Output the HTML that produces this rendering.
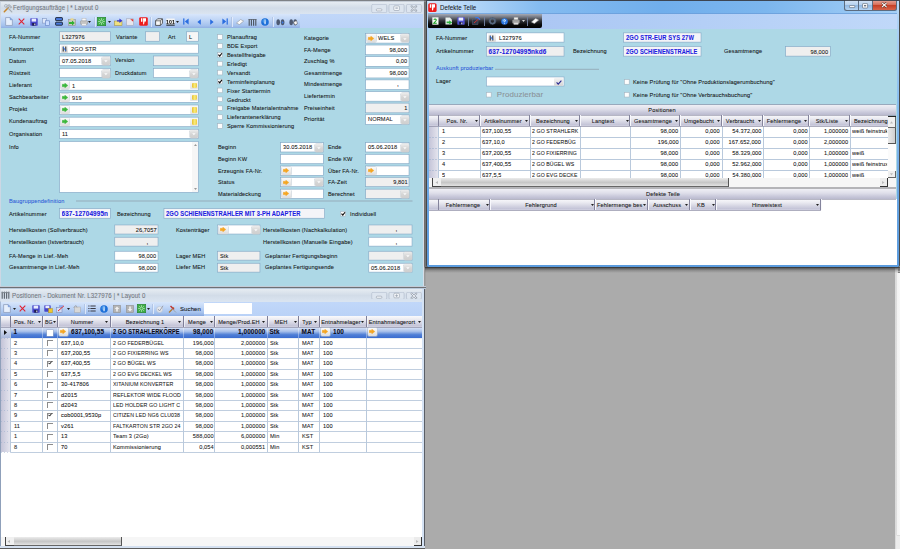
<!DOCTYPE html>
<html lang="de"><head><meta charset="utf-8"><title>Fertigungsauftr&auml;ge</title>
<style>
html,body{margin:0;padding:0;overflow:hidden}
body{width:900px;height:549px;overflow:hidden;position:relative;background:#ababab;
font-family:"Liberation Sans",sans-serif;font-size:5.7px;color:#1c1c1c}
div,svg{position:absolute;box-sizing:content-box}
.t{white-space:nowrap;letter-spacing:0.11px;-webkit-text-stroke:0.07px currentColor}
</style></head><body>

<div style="left:894.8px;top:0px;width:5.2px;height:549px;background:linear-gradient(90deg,#cfcfcf,#ebebeb 1.2px,#ececec);"></div>
<div style="left:896.4px;top:268px;width:4px;height:267px;background:linear-gradient(90deg,#d2d2d2,#f3f3f3 1.4px,#f7f7f7);border-radius:0 0 0 1.5px;box-shadow:0 0.6px 0 0 #cacaca;"></div>
<svg style="left:897px;top:268px" width="3" height="6" viewBox="0 0 3 6"><path d="M0.8 1.2h2.2M0.8 2.8h2.2M0.8 4.4h2.2" stroke="#555" stroke-width="0.8"/></svg>
<div style="left:0px;top:0px;width:426px;height:289px;background:#b9c9db;"></div>
<div style="left:0px;top:0px;width:426px;height:1.2px;background:#7e8186;"></div>
<div style="left:0px;top:1.2px;width:426px;height:1px;background:#c6ced8;"></div>
<div style="left:1px;top:2px;width:423px;height:12px;background:linear-gradient(#e6ecf2 0%,#d2dce8 50%,#dbe5f1 100%);"></div>
<div style="left:1px;top:14px;width:423px;height:15px;background:linear-gradient(#c1d7f9,#bad2f7);"></div>
<div style="left:1px;top:14px;width:299px;height:14.6px;background:linear-gradient(#d8e6fb 0%,#bfd5f6 40%,#a4c1ed 78%,#86a7df 100%);border-radius:0 0 2px 0;"></div>
<div style="left:1px;top:28.4px;width:423px;height:257.6px;background:#add8e6;"></div>
<svg style="left:2.5px;top:3px" width="10" height="10" viewBox="0 0 10 10"><path d="M1.3 8.7L5.2 4.8" stroke="#c8862a" stroke-width="1.5" stroke-linecap="round"/><path d="M4.2 2.2l2.2 -0.6 2.6 2.6 -1 1z" fill="#b8bec6" stroke="#8e959e" stroke-width="0.4"/><path d="M8.8 8.8L3.6 3.6" stroke="#a4abb4" stroke-width="1.2" stroke-linecap="round"/><circle cx="2.9" cy="2.9" r="1.4" fill="none" stroke="#aab1ba" stroke-width="0.9"/></svg>
<div class="t" style="top:3.40px;height:10px;line-height:10px;font-size:6.7px;color:#70757d;left:13px;transform:scaleX(0.897);transform-origin:0 50%;">Fertigungsaufträge | * Layout 0</div>
<svg style="left:370px;top:3.6px" width="54" height="9.0"><rect x="1.70" y="0.3" width="15.00" height="8.40" rx="1.3" fill="#dde5ef" stroke="#b4bfce" stroke-width="0.7"/><rect x="19.00" y="0.3" width="15.10" height="8.40" rx="1.3" fill="#dde5ef" stroke="#b4bfce" stroke-width="0.7"/><rect x="36.50" y="0.3" width="14.90" height="8.40" rx="1.3" fill="#dde5ef" stroke="#b4bfce" stroke-width="0.7"/><rect x="6.300000000000011" y="4.80" width="5.6" height="2.1" rx="0.9" fill="#f4f6f9" stroke="#929caa" stroke-width="0.6"/><rect x="23.80000000000001" y="1.90" width="5.6" height="4.6" rx="1" fill="#f4f6f9" stroke="#929caa" stroke-width="0.6"/><rect x="25.399999999999977" y="3.30" width="2.4" height="1.6" fill="#b4bcc8"/><path d="M41.59999999999998 2.30L46.199999999999974 6.70M46.199999999999974 2.30L41.59999999999998 6.70" stroke="#929caa" stroke-width="2" stroke-linecap="round"/><path d="M41.59999999999998 2.30L46.199999999999974 6.70M46.199999999999974 2.30L41.59999999999998 6.70" stroke="#f6f8fa" stroke-width="0.9" stroke-linecap="round"/></svg>
<svg style="left:5.3px;top:17.0px" width="8" height="9" viewBox="0 0 7 8"><path d="M0.5 0.5h4l2 2v5h-6z" fill="#e6effc" stroke="#8d9ebd" stroke-width="0.7"/><path d="M4.5 0.5v2h2" fill="#7aa0e0" stroke="#6f8fcf" stroke-width="0.4"/></svg>
<svg style="left:17.5px;top:18.0px" width="7" height="7" viewBox="0 0 7 7"><path d="M0.7 0.7L6.3 6.3M6.3 0.7L0.7 6.3" stroke="#e02030" stroke-width="1.05"/></svg>
<svg style="left:30px;top:17.5px" width="8" height="8" viewBox="0 0 8 8"><rect x="0.3" y="0.3" width="7.4" height="7.4" rx="0.6" fill="#4646c8"/><rect x="1.6" y="0.6" width="4.6" height="3" fill="#e8ecff"/><rect x="2.2" y="5" width="3.4" height="2.7" fill="#1c1c50"/><rect x="4.3" y="5.5" width="1" height="1.8" fill="#eee"/></svg>
<svg style="left:42px;top:17.5px" width="8" height="8" viewBox="0 0 8 8"><rect x="0.5" y="0.5" width="4" height="4.6" fill="#dfe8fa" stroke="#7f95c2" stroke-width="0.6"/><rect x="3.4" y="2.8" width="4" height="4.6" fill="#c9dcff" stroke="#5f7fc2" stroke-width="0.6"/></svg>
<svg style="left:55px;top:17.0px" width="8" height="9" viewBox="0 0 8 9"><rect x="0.6" y="0.6" width="6.8" height="3" rx="0.5" fill="#4a7be0" stroke="#1a2030" stroke-width="0.9"/><rect x="0.6" y="5.2" width="6.8" height="3" rx="0.5" fill="#4a7be0" stroke="#1a2030" stroke-width="0.9"/></svg>
<svg style="left:68px;top:17.5px" width="8" height="8" viewBox="0 0 8 8"><rect x="0.5" y="1.5" width="7" height="6" fill="#c9c9c0" stroke="#8a8a80" stroke-width="0.5"/><path d="M1 4h3V2.6L6.8 5 4 7.4V6H1z" fill="#30b030"/><rect x="2.5" y="0.3" width="3" height="2" fill="#e8d890"/></svg>
<svg style="left:79.5px;top:17.5px" width="8" height="8" viewBox="0 0 8 8"><rect x="2" y="0.3" width="4" height="3" fill="#f8f8f8" stroke="#aaa" stroke-width="0.4"/><rect x="0.4" y="2.8" width="7.2" height="3.6" rx="0.8" fill="#c4c4c4" stroke="#909090" stroke-width="0.5"/><rect x="1.8" y="5.4" width="4.4" height="2.2" fill="#eee" stroke="#aaa" stroke-width="0.4"/></svg>
<svg style="left:88.3px;top:20.5px" width="3" height="2" viewBox="0 0 3 2"><path d="M0 0h3L1.5 2z" fill="#222"/></svg>
<div style="left:94px;top:16.5px;width:1px;height:10px;background:#a9bee0;opacity:.7;"></div>
<div style="left:95px;top:16.5px;width:1px;height:10px;background:#e8f0fc;opacity:.8;"></div>
<svg style="left:97.3px;top:17.0px" width="9" height="9" viewBox="0 0 9 9"><rect x="0.3" y="0.3" width="8.4" height="8.4" fill="#3fae48" stroke="#23802c" stroke-width="0.6"/><path d="M4.5 1.2v6.6M1.2 4.5h6.6M2.2 2.2l4.6 4.6M6.8 2.2L2.2 6.8" stroke="#d8f4d8" stroke-width="0.7" opacity=".85"/><circle cx="4.5" cy="4.5" r="1.1" fill="#3fae48"/></svg>
<svg style="left:108.3px;top:20.5px" width="3" height="2" viewBox="0 0 3 2"><path d="M0 0h3L1.5 2z" fill="#222"/></svg>
<svg style="left:114px;top:17.5px" width="9" height="8" viewBox="0 0 9 8"><rect x="0.5" y="3" width="7.5" height="4.5" fill="#efe080" stroke="#9a8a30" stroke-width="0.5"/><path d="M3 2.2h2.4V0.6L8.4 2.8 5.4 5V3.6H3z" fill="#3a3ad0"/></svg>
<svg style="left:126px;top:17.5px" width="8" height="8" viewBox="0 0 8 8"><rect x="0.5" y="0.8" width="7" height="6.4" fill="#e6e6ee" stroke="#a0a0b0" stroke-width="0.5"/><path d="M4.2 1.2h3v2.6z" fill="#e03030"/></svg>
<svg style="left:138.8px;top:17.0px" width="9" height="9" viewBox="0 0 9 9"><rect x="0.2" y="0.2" width="8.6" height="8.6" rx="1.4" fill="#ee1c1c"/><path d="M2 1.2h1.4v3.6H2zM4 1.2h3v3.4H5.6L5 7.4 4.2 7.2z" fill="#fff"/></svg>
<div style="left:150px;top:16.5px;width:1px;height:10px;background:#a9bee0;opacity:.7;"></div>
<div style="left:151px;top:16.5px;width:1px;height:10px;background:#e8f0fc;opacity:.8;"></div>
<svg style="left:154.5px;top:17.5px" width="8" height="8" viewBox="0 0 8 8"><path d="M0.6 2.8L2.6 0.8h4.8v4.4L5.4 7.4H0.6z" fill="#f8f8f8" stroke="#222" stroke-width="0.7"/><path d="M0.6 2.8h4.8v4.6M5.4 2.8l2-2" stroke="#222" stroke-width="0.6" fill="none"/></svg>
<svg style="left:166px;top:17.5px" width="9" height="8" viewBox="0 0 9 8"><rect x="0.3" y="0.5" width="8.4" height="6" fill="#f4f4f4"/><rect x="0.3" y="6.6" width="8.4" height="1" fill="#111"/></svg>
<div class="t" style="top:16.60px;height:10px;line-height:10px;font-size:5.2px;color:#111;font-weight:bold;left:166.4px;will-change:transform;">101</div>
<svg style="left:176.3px;top:20.5px" width="3" height="2" viewBox="0 0 3 2"><path d="M0 0h3L1.5 2z" fill="#222"/></svg>
<svg style="left:182.5px;top:18.0px" width="6" height="7" viewBox="0 0 6 7"><rect x="0.2" y="0.4" width="1.2" height="6.2" fill="#2a6de0"/><path d="M5.6 0.6v5.8L1.8 3.5z" fill="#2a6de0"/></svg>
<svg style="left:197px;top:18.5px" width="4" height="6" viewBox="0 0 4 6"><path d="M3.8 0.3v5.4L0.4 3z" fill="#2a6de0"/></svg>
<svg style="left:209.5px;top:18.5px" width="4" height="6" viewBox="0 0 4 6"><path d="M0.2 0.3v5.4L3.6 3z" fill="#2a6de0"/></svg>
<svg style="left:221.5px;top:18.0px" width="6" height="7" viewBox="0 0 6 7"><rect x="4.6" y="0.4" width="1.2" height="6.2" fill="#2a6de0"/><path d="M0.4 0.6v5.8L4.2 3.5z" fill="#2a6de0"/></svg>
<div style="left:231px;top:16.5px;width:1px;height:10px;background:#a9bee0;opacity:.7;"></div>
<div style="left:232px;top:16.5px;width:1px;height:10px;background:#e8f0fc;opacity:.8;"></div>
<svg style="left:236px;top:18.5px" width="8" height="6" viewBox="0 0 8 6"><path d="M0.5 4L4.6 0.5l3 1.6L3.4 5.6z" fill="#fafafa" stroke="#8a8a8a" stroke-width="0.5"/></svg>
<svg style="left:248px;top:17.5px" width="9" height="8" viewBox="0 0 9 8"><path d="M1.2 1.2v6.6M3.4 1.2v6.6M5.6 1.2v6.6M7.8 1.2v6.6" stroke="#4a525c" stroke-width="1.1"/><path d="M0.5 1.5h8" stroke="#5a626c" stroke-width="0.8"/></svg>
<svg style="left:261px;top:17.5px" width="8" height="8" viewBox="0 0 8 8"><circle cx="4" cy="4" r="3.8" fill="#1c6fd8"/><circle cx="3.4" cy="3" r="2" fill="#5aa6f0" opacity="0.7"/><rect x="3.5" y="3.2" width="1.1" height="3" fill="#fff"/><rect x="3.5" y="1.6" width="1.1" height="1.1" fill="#fff"/></svg>
<div style="left:272px;top:16.5px;width:1px;height:10px;background:#a9bee0;opacity:.7;"></div>
<div style="left:273px;top:16.5px;width:1px;height:10px;background:#e8f0fc;opacity:.8;"></div>
<svg style="left:276px;top:17.5px" width="9" height="8" viewBox="0 0 9 8"><ellipse cx="2.2" cy="4.2" rx="1.8" ry="3" fill="#4e5a72"/><ellipse cx="6.6" cy="4.2" rx="1.8" ry="3" fill="#4e5a72"/><path d="M5.8 3l2 1.4-2 1.6z" fill="#3b7be8"/></svg>
<svg style="left:289px;top:17.5px" width="9" height="8" viewBox="0 0 9 8"><ellipse cx="2.2" cy="4.2" rx="1.8" ry="3" fill="#4e5a72"/><ellipse cx="6.2" cy="4.2" rx="1.8" ry="3" fill="#4e5a72"/><path d="M4.5 4l3-1.4 1 3-2.6 1.6z" fill="#f8f8f8" stroke="#333" stroke-width="0.4"/></svg>
<div class="t" style="top:32.40px;height:10px;line-height:10px;font-size:6.1px;color:#141414;left:8.8px;transform:scaleX(0.926);transform-origin:0 50%;">FA-Nummer</div>
<div class="t" style="top:43.60px;height:10px;line-height:10px;font-size:6.1px;color:#141414;left:8.8px;transform:scaleX(0.926);transform-origin:0 50%;">Kennwort</div>
<div class="t" style="top:55.60px;height:10px;line-height:10px;font-size:6.1px;color:#141414;left:8.8px;transform:scaleX(0.926);transform-origin:0 50%;">Datum</div>
<div class="t" style="top:67.80px;height:10px;line-height:10px;font-size:6.1px;color:#141414;left:8.8px;transform:scaleX(0.926);transform-origin:0 50%;">Rüstzeit</div>
<div class="t" style="top:80.00px;height:10px;line-height:10px;font-size:6.1px;color:#141414;left:8.8px;transform:scaleX(0.926);transform-origin:0 50%;">Lieferant</div>
<div class="t" style="top:92.20px;height:10px;line-height:10px;font-size:6.1px;color:#141414;left:8.8px;transform:scaleX(0.926);transform-origin:0 50%;">Sachbearbeiter</div>
<div class="t" style="top:104.20px;height:10px;line-height:10px;font-size:6.1px;color:#141414;left:8.8px;transform:scaleX(0.926);transform-origin:0 50%;">Projekt</div>
<div class="t" style="top:116.20px;height:10px;line-height:10px;font-size:6.1px;color:#141414;left:8.8px;transform:scaleX(0.926);transform-origin:0 50%;">Kundenauftrag</div>
<div class="t" style="top:128.50px;height:10px;line-height:10px;font-size:6.1px;color:#141414;left:8.8px;transform:scaleX(0.926);transform-origin:0 50%;">Organisation</div>
<div class="t" style="top:141.50px;height:10px;line-height:10px;font-size:6.1px;color:#141414;left:8.8px;transform:scaleX(0.926);transform-origin:0 50%;">Info</div>
<svg style="left:58px;top:30px" width="55" height="14"><rect x="1.65" y="1.75" width="50.70" height="9.50" fill="#efefef" stroke="#86a9c6" stroke-width="0.65"/></svg>
<div class="t" style="top:32.40px;height:10px;line-height:10px;font-size:6.1px;color:#141414;left:61.5px;transform:scaleX(0.926);transform-origin:0 50%;">L327976</div>
<div class="t" style="top:32.30px;height:10px;line-height:10px;font-size:6.1px;color:#141414;left:116px;transform:scaleX(0.926);transform-origin:0 50%;">Variante</div>
<svg style="left:144px;top:30px" width="18" height="14"><rect x="1.65" y="1.75" width="14.00" height="9.50" fill="#efefef" stroke="#86a9c6" stroke-width="0.65"/></svg>
<div class="t" style="top:32.30px;height:10px;line-height:10px;font-size:6.1px;color:#141414;left:168px;transform:scaleX(0.926);transform-origin:0 50%;">Art</div>
<svg style="left:185px;top:30px" width="16" height="14"><rect x="1.65" y="1.75" width="11.70" height="9.50" fill="#f6f6f6" stroke="#86a9c6" stroke-width="0.65"/></svg>
<div class="t" style="top:32.40px;height:10px;line-height:10px;font-size:6.1px;color:#141414;left:188.8px;transform:scaleX(0.926);transform-origin:0 50%;">L</div>
<svg style="left:58px;top:42px" width="143" height="13"><rect x="1.65" y="2.12" width="138.70" height="9.10" fill="#fff" stroke="#86a9c6" stroke-width="0.65"/></svg>
<div style="left:60.5px;top:45px;width:7px;height:8px;background:linear-gradient(#f6f6f6,#d8d8d8);border-radius:1px;"></div>
<svg style="left:61.5px;top:46px" width="5" height="6" viewBox="0 0 5 6"><path d="M1.2 0.5v5M3.8 0.5v5" stroke="#222" stroke-width="1"/><path d="M1.2 1L3.8 5" stroke="#2a6de0" stroke-width="1"/></svg>
<div class="t" style="top:43.87px;height:10px;line-height:10px;font-size:6.1px;color:#141414;left:70.5px;transform:scaleX(0.926);transform-origin:0 50%;">2GO STR</div>
<svg style="left:58px;top:54px" width="55" height="14"><rect x="1.65" y="1.99" width="50.70" height="9.70" fill="#fff" stroke="#86a9c6" stroke-width="0.65"/></svg>
<div class="t" style="top:55.74px;height:10px;line-height:10px;font-size:6.1px;color:#141414;left:61.5px;transform:scaleX(0.926);transform-origin:0 50%;">07.05.2018</div>
<div style="left:101.5px;top:57.2px;width:8.3px;height:8px;background:linear-gradient(#ececec,#d6d6d6 50%,#cfcfcf);border-radius:1.2px;box-shadow:0 0 0 0.5px #c4ccd2;"></div>
<svg style="left:104.1px;top:60.4px" width="4" height="3" viewBox="0 0 4 3"><path d="M0.2 0.2h3.4L1.9 2.3z" fill="#fbfbfb"/></svg>
<div class="t" style="top:55.10px;height:10px;line-height:10px;font-size:6.1px;color:#141414;left:115.3px;transform:scaleX(0.926);transform-origin:0 50%;">Version</div>
<svg style="left:152px;top:54px" width="49" height="14"><rect x="1.35" y="1.99" width="45.00" height="9.70" fill="#efefef" stroke="#86a9c6" stroke-width="0.65"/></svg>
<svg style="left:58px;top:67px" width="55" height="13"><rect x="1.65" y="1.36" width="50.70" height="9.30" fill="#fff" stroke="#86a9c6" stroke-width="0.65"/></svg>
<div style="left:101.5px;top:69.7px;width:8.3px;height:8px;background:linear-gradient(#ececec,#d6d6d6 50%,#cfcfcf);border-radius:1.2px;box-shadow:0 0 0 0.5px #c4ccd2;"></div>
<svg style="left:104.1px;top:72.9px" width="4" height="3" viewBox="0 0 4 3"><path d="M0.2 0.2h3.4L1.9 2.3z" fill="#fbfbfb"/></svg>
<div class="t" style="top:67.80px;height:10px;line-height:10px;font-size:6.1px;color:#141414;left:115.3px;transform:scaleX(0.926);transform-origin:0 50%;">Druckdatum</div>
<svg style="left:152px;top:67px" width="49" height="13"><rect x="1.35" y="1.36" width="45.00" height="9.30" fill="#fff" stroke="#86a9c6" stroke-width="0.65"/></svg>
<div style="left:189.5px;top:69.7px;width:8.3px;height:8px;background:linear-gradient(#ececec,#d6d6d6 50%,#cfcfcf);border-radius:1.2px;box-shadow:0 0 0 0.5px #c4ccd2;"></div>
<svg style="left:192.10000000000002px;top:72.9px" width="4" height="3" viewBox="0 0 4 3"><path d="M0.2 0.2h3.4L1.9 2.3z" fill="#fbfbfb"/></svg>
<svg style="left:58px;top:79px" width="143" height="14"><rect x="1.65" y="1.68" width="138.70" height="9.50" fill="#fff" stroke="#86a9c6" stroke-width="0.65"/></svg>
<div style="left:60.5px;top:81.43px;width:8px;height:8px;background:linear-gradient(#fbfbfb,#dcdcdc);border-radius:1px;box-shadow:0 0 0 0.5px #b9c4cc;"></div>
<svg style="left:61.5px;top:82.93px" width="6" height="5" viewBox="0 0 6 5"><path d="M0.2 1.3h2.6V0.1L5.9 2.5 2.8 4.9V3.7H0.2z" fill="#3cb83c" stroke="#3cb83c" stroke-width="0.3" stroke-linejoin="round"/></svg>
<div class="t" style="top:80.83px;height:10px;line-height:10px;font-size:6.1px;color:#141414;left:72px;transform:scaleX(0.926);transform-origin:0 50%;">1</div>
<div style="left:190.3px;top:81.23px;width:8px;height:8px;background:linear-gradient(#f8f8f8,#e4e4e4);border-radius:1px;"></div>
<div style="left:191.8px;top:82.63px;width:5.4px;height:5.7px;background:linear-gradient(90deg,#e8c030,#f8ec80 55%,#ecc838);border-radius:1px 1px 1.5px 1.5px;"></div>
<svg style="left:58px;top:91px" width="143" height="14"><rect x="1.65" y="1.85" width="138.70" height="9.50" fill="#fff" stroke="#86a9c6" stroke-width="0.65"/></svg>
<div style="left:60.5px;top:93.6px;width:8px;height:8px;background:linear-gradient(#fbfbfb,#dcdcdc);border-radius:1px;box-shadow:0 0 0 0.5px #b9c4cc;"></div>
<svg style="left:61.5px;top:95.1px" width="6" height="5" viewBox="0 0 6 5"><path d="M0.2 1.3h2.6V0.1L5.9 2.5 2.8 4.9V3.7H0.2z" fill="#3cb83c" stroke="#3cb83c" stroke-width="0.3" stroke-linejoin="round"/></svg>
<div class="t" style="top:93.00px;height:10px;line-height:10px;font-size:6.1px;color:#141414;left:72px;transform:scaleX(0.926);transform-origin:0 50%;">919</div>
<div style="left:190.3px;top:93.39999999999999px;width:8px;height:8px;background:linear-gradient(#f8f8f8,#e4e4e4);border-radius:1px;"></div>
<div style="left:191.8px;top:94.79999999999998px;width:5.4px;height:5.7px;background:linear-gradient(90deg,#e8c030,#f8ec80 55%,#ecc838);border-radius:1px 1px 1.5px 1.5px;"></div>
<svg style="left:58px;top:103px" width="143" height="14"><rect x="1.65" y="2.02" width="138.70" height="9.50" fill="#fff" stroke="#86a9c6" stroke-width="0.65"/></svg>
<div style="left:60.5px;top:105.77px;width:8px;height:8px;background:linear-gradient(#fbfbfb,#dcdcdc);border-radius:1px;box-shadow:0 0 0 0.5px #b9c4cc;"></div>
<svg style="left:61.5px;top:107.27px" width="6" height="5" viewBox="0 0 6 5"><path d="M0.2 1.3h2.6V0.1L5.9 2.5 2.8 4.9V3.7H0.2z" fill="#3cb83c" stroke="#3cb83c" stroke-width="0.3" stroke-linejoin="round"/></svg>
<div style="left:190.3px;top:105.57px;width:8px;height:8px;background:linear-gradient(#f8f8f8,#e4e4e4);border-radius:1px;"></div>
<div style="left:191.8px;top:106.96999999999998px;width:5.4px;height:5.7px;background:linear-gradient(90deg,#e8c030,#f8ec80 55%,#ecc838);border-radius:1px 1px 1.5px 1.5px;"></div>
<svg style="left:58px;top:115px" width="143" height="14"><rect x="1.65" y="2.19" width="138.70" height="9.50" fill="#fff" stroke="#86a9c6" stroke-width="0.65"/></svg>
<div style="left:60.5px;top:117.94px;width:8px;height:8px;background:linear-gradient(#fbfbfb,#dcdcdc);border-radius:1px;box-shadow:0 0 0 0.5px #b9c4cc;"></div>
<svg style="left:61.5px;top:119.44px" width="6" height="5" viewBox="0 0 6 5"><path d="M0.2 1.3h2.6V0.1L5.9 2.5 2.8 4.9V3.7H0.2z" fill="#3cb83c" stroke="#3cb83c" stroke-width="0.3" stroke-linejoin="round"/></svg>
<div style="left:190.3px;top:117.74px;width:8px;height:8px;background:linear-gradient(#f8f8f8,#e4e4e4);border-radius:1px;"></div>
<div style="left:191.8px;top:119.13999999999999px;width:5.4px;height:5.7px;background:linear-gradient(90deg,#e8c030,#f8ec80 55%,#ecc838);border-radius:1px 1px 1.5px 1.5px;"></div>
<svg style="left:58px;top:127px" width="143" height="13"><rect x="1.65" y="2.31" width="138.70" height="9.10" fill="#fff" stroke="#86a9c6" stroke-width="0.65"/></svg>
<div class="t" style="top:129.16px;height:10px;line-height:10px;font-size:6.1px;color:#141414;left:61.5px;transform:scaleX(0.926);transform-origin:0 50%;">11</div>
<div style="left:189.5px;top:130.06px;width:8.3px;height:8px;background:linear-gradient(#ececec,#d6d6d6 50%,#cfcfcf);border-radius:1.2px;box-shadow:0 0 0 0.5px #c4ccd2;"></div>
<svg style="left:192.10000000000002px;top:133.26000000000002px" width="4" height="3" viewBox="0 0 4 3"><path d="M0.2 0.2h3.4L1.9 2.3z" fill="#fbfbfb"/></svg>
<svg style="left:58px;top:140px" width="143" height="55"><rect x="1.65" y="1.45" width="138.70" height="50.90" fill="#fff" stroke="#86a9c6" stroke-width="0.65"/></svg>
<div style="left:192.3px;top:142px;width:5.6px;height:50px;background:#f6f6f6;"></div>
<svg style="left:193.5px;top:144px" width="3" height="2" viewBox="0 0 3 2"><path d="M0 2h3L1.5 0z" fill="#999"/></svg>
<svg style="left:193.5px;top:188px" width="3" height="2" viewBox="0 0 3 2"><path d="M0 0h3L1.5 2z" fill="#999"/></svg>
<svg style="left:216px;top:33px" width="9" height="9"><rect x="1.60" y="1.65" width="4.90" height="4.70" fill="#fdfdfd" stroke="#a4b4c0" stroke-width="0.6"/></svg>
<div class="t" style="top:32.20px;height:10px;line-height:10px;font-size:6.1px;color:#141414;left:226.7px;transform:scaleX(0.926);transform-origin:0 50%;">Planauftrag</div>
<svg style="left:216px;top:42px" width="9" height="9"><rect x="1.60" y="1.55" width="4.90" height="4.70" fill="#fdfdfd" stroke="#a4b4c0" stroke-width="0.6"/></svg>
<div class="t" style="top:41.10px;height:10px;line-height:10px;font-size:6.1px;color:#141414;left:226.7px;transform:scaleX(0.926);transform-origin:0 50%;">BDE Export</div>
<svg style="left:216px;top:51px" width="9" height="9"><rect x="1.60" y="1.45" width="4.90" height="4.70" fill="#fdfdfd" stroke="#a4b4c0" stroke-width="0.6"/><path d="M2.40 3.65l1.3 1.4 2.2-2.8" stroke="#0c0c0c" stroke-width="1.15" fill="none"/></svg>
<div class="t" style="top:50.00px;height:10px;line-height:10px;font-size:6.1px;color:#141414;left:226.7px;transform:scaleX(0.926);transform-origin:0 50%;">Bestellfreigabe</div>
<svg style="left:216px;top:60px" width="9" height="9"><rect x="1.60" y="1.35" width="4.90" height="4.70" fill="#fdfdfd" stroke="#a4b4c0" stroke-width="0.6"/></svg>
<div class="t" style="top:58.90px;height:10px;line-height:10px;font-size:6.1px;color:#141414;left:226.7px;transform:scaleX(0.926);transform-origin:0 50%;">Erledigt</div>
<svg style="left:216px;top:68px" width="9" height="9"><rect x="1.60" y="2.25" width="4.90" height="4.70" fill="#fdfdfd" stroke="#a4b4c0" stroke-width="0.6"/></svg>
<div class="t" style="top:67.80px;height:10px;line-height:10px;font-size:6.1px;color:#141414;left:226.7px;transform:scaleX(0.926);transform-origin:0 50%;">Versandt</div>
<svg style="left:216px;top:77px" width="9" height="9"><rect x="1.60" y="2.15" width="4.90" height="4.70" fill="#fdfdfd" stroke="#a4b4c0" stroke-width="0.6"/><path d="M2.40 4.35l1.3 1.4 2.2-2.8" stroke="#0c0c0c" stroke-width="1.15" fill="none"/></svg>
<div class="t" style="top:76.70px;height:10px;line-height:10px;font-size:6.1px;color:#141414;left:226.7px;transform:scaleX(0.926);transform-origin:0 50%;">Terminfeinplanung</div>
<svg style="left:216px;top:86px" width="9" height="9"><rect x="1.60" y="2.05" width="4.90" height="4.70" fill="#fdfdfd" stroke="#a4b4c0" stroke-width="0.6"/></svg>
<div class="t" style="top:85.60px;height:10px;line-height:10px;font-size:6.1px;color:#141414;left:226.7px;transform:scaleX(0.926);transform-origin:0 50%;">Fixer Starttermin</div>
<svg style="left:216px;top:95px" width="9" height="9"><rect x="1.60" y="1.95" width="4.90" height="4.70" fill="#fdfdfd" stroke="#a4b4c0" stroke-width="0.6"/></svg>
<div class="t" style="top:94.50px;height:10px;line-height:10px;font-size:6.1px;color:#141414;left:226.7px;transform:scaleX(0.926);transform-origin:0 50%;">Gedruckt</div>
<svg style="left:216px;top:104px" width="9" height="9"><rect x="1.60" y="1.85" width="4.90" height="4.70" fill="#fdfdfd" stroke="#a4b4c0" stroke-width="0.6"/></svg>
<div class="t" style="top:103.40px;height:10px;line-height:10px;font-size:6.1px;color:#141414;left:226.7px;transform:scaleX(0.926);transform-origin:0 50%;">Freigabe Materialentnahme</div>
<svg style="left:216px;top:113px" width="9" height="9"><rect x="1.60" y="1.75" width="4.90" height="4.70" fill="#fdfdfd" stroke="#a4b4c0" stroke-width="0.6"/></svg>
<div class="t" style="top:112.30px;height:10px;line-height:10px;font-size:6.1px;color:#141414;left:226.7px;transform:scaleX(0.926);transform-origin:0 50%;">Lieferantenerklärung</div>
<svg style="left:216px;top:122px" width="9" height="9"><rect x="1.60" y="1.65" width="4.90" height="4.70" fill="#fdfdfd" stroke="#a4b4c0" stroke-width="0.6"/></svg>
<div class="t" style="top:121.20px;height:10px;line-height:10px;font-size:6.1px;color:#141414;left:226.7px;transform:scaleX(0.926);transform-origin:0 50%;">Sperre Kommissionierung</div>
<div class="t" style="top:33.10px;height:10px;line-height:10px;font-size:6.1px;color:#141414;left:303.6px;transform:scaleX(0.926);transform-origin:0 50%;">Kategorie</div>
<svg style="left:364px;top:32px" width="48" height="14"><rect x="1.65" y="1.40" width="43.40" height="9.70" fill="#fff" stroke="#86a9c6" stroke-width="0.65"/></svg>
<div class="t" style="top:44.50px;height:10px;line-height:10px;font-size:6.1px;color:#141414;left:303.6px;transform:scaleX(0.926);transform-origin:0 50%;">FA-Menge</div>
<svg style="left:364px;top:43px" width="48" height="14"><rect x="1.65" y="2.02" width="43.40" height="9.70" fill="#fff" stroke="#86a9c6" stroke-width="0.65"/></svg>
<div class="t" style="top:56.20px;height:10px;line-height:10px;font-size:6.1px;color:#141414;left:303.6px;transform:scaleX(0.926);transform-origin:0 50%;">Zuschlag %</div>
<svg style="left:364px;top:55px" width="48" height="14"><rect x="1.65" y="1.64" width="43.40" height="9.70" fill="#fff" stroke="#86a9c6" stroke-width="0.65"/></svg>
<div class="t" style="top:67.50px;height:10px;line-height:10px;font-size:6.1px;color:#141414;left:303.6px;transform:scaleX(0.926);transform-origin:0 50%;">Gesamtmenge</div>
<svg style="left:364px;top:66px" width="48" height="14"><rect x="1.65" y="2.26" width="43.40" height="9.70" fill="#fff" stroke="#86a9c6" stroke-width="0.65"/></svg>
<div class="t" style="top:79.20px;height:10px;line-height:10px;font-size:6.1px;color:#141414;left:303.6px;transform:scaleX(0.926);transform-origin:0 50%;">Mindestmenge</div>
<svg style="left:364px;top:78px" width="48" height="14"><rect x="1.65" y="1.88" width="43.40" height="9.70" fill="#fff" stroke="#86a9c6" stroke-width="0.65"/></svg>
<div class="t" style="top:90.80px;height:10px;line-height:10px;font-size:6.1px;color:#141414;left:303.6px;transform:scaleX(0.926);transform-origin:0 50%;">Liefertermin</div>
<svg style="left:364px;top:90px" width="48" height="14"><rect x="1.65" y="1.50" width="43.40" height="9.70" fill="#fff" stroke="#86a9c6" stroke-width="0.65"/></svg>
<div class="t" style="top:102.80px;height:10px;line-height:10px;font-size:6.1px;color:#141414;left:303.6px;transform:scaleX(0.926);transform-origin:0 50%;">Preiseinheit</div>
<svg style="left:364px;top:101px" width="48" height="14"><rect x="1.65" y="2.12" width="43.40" height="9.70" fill="#efefef" stroke="#86a9c6" stroke-width="0.65"/></svg>
<div class="t" style="top:114.30px;height:10px;line-height:10px;font-size:6.1px;color:#141414;left:303.6px;transform:scaleX(0.926);transform-origin:0 50%;">Priorität</div>
<svg style="left:364px;top:113px" width="48" height="14"><rect x="1.65" y="1.74" width="43.40" height="9.70" fill="#fff" stroke="#86a9c6" stroke-width="0.65"/></svg>
<div style="left:366.7px;top:34.25px;width:9px;height:8px;background:linear-gradient(#fbfbfb,#dcdcdc);border-radius:1px;box-shadow:0 0 0 0.5px #b9c4cc;"></div>
<svg style="left:367.7px;top:35.75px" width="6" height="5" viewBox="0 0 6 5"><path d="M0.2 1.3h2.6V0.1L5.9 2.5 2.8 4.9V3.7H0.2z" fill="#f5a623" stroke="#f5a623" stroke-width="0.3" stroke-linejoin="round"/></svg>
<div class="t" style="top:33.20px;height:10px;line-height:10px;font-size:6.1px;color:#141414;left:378px;transform:scaleX(0.926);transform-origin:0 50%;">WELS</div>
<div style="left:400.5px;top:34.45px;width:8.3px;height:8px;background:linear-gradient(#ececec,#d6d6d6 50%,#cfcfcf);border-radius:1.2px;box-shadow:0 0 0 0.5px #c4ccd2;"></div>
<svg style="left:403.1px;top:37.65px" width="4" height="3" viewBox="0 0 4 3"><path d="M0.2 0.2h3.4L1.9 2.3z" fill="#fbfbfb"/></svg>
<div class="t" style="top:44.60px;height:10px;line-height:10px;font-size:6.1px;color:#141414;right:492.5px;text-align:right;transform:scaleX(0.926);transform-origin:100% 50%;">98,000</div>
<div class="t" style="top:56.30px;height:10px;line-height:10px;font-size:6.1px;color:#141414;right:492.5px;text-align:right;transform:scaleX(0.926);transform-origin:100% 50%;">0,00</div>
<div class="t" style="top:67.60px;height:10px;line-height:10px;font-size:6.1px;color:#141414;right:492.5px;text-align:right;transform:scaleX(0.926);transform-origin:100% 50%;">98,000</div>
<div class="t" style="top:79.20px;height:10px;line-height:10px;font-size:6.6px;color:#141414;right:501px;text-align:right;">,</div>
<div style="left:400.5px;top:92.55px;width:8.3px;height:8px;background:linear-gradient(#ececec,#d6d6d6 50%,#cfcfcf);border-radius:1.2px;box-shadow:0 0 0 0.5px #c4ccd2;"></div>
<svg style="left:403.1px;top:95.75px" width="4" height="3" viewBox="0 0 4 3"><path d="M0.2 0.2h3.4L1.9 2.3z" fill="#fbfbfb"/></svg>
<div class="t" style="top:102.90px;height:10px;line-height:10px;font-size:6.1px;color:#141414;right:492.5px;text-align:right;transform:scaleX(0.926);transform-origin:100% 50%;">1</div>
<div class="t" style="top:114.40px;height:10px;line-height:10px;font-size:6.1px;color:#141414;left:367.5px;transform:scaleX(0.926);transform-origin:0 50%;">NORMAL</div>
<div style="left:400.5px;top:115.78999999999999px;width:8.3px;height:8px;background:linear-gradient(#ececec,#d6d6d6 50%,#cfcfcf);border-radius:1.2px;box-shadow:0 0 0 0.5px #c4ccd2;"></div>
<svg style="left:403.1px;top:118.99px" width="4" height="3" viewBox="0 0 4 3"><path d="M0.2 0.2h3.4L1.9 2.3z" fill="#fbfbfb"/></svg>
<div class="t" style="top:142.30px;height:10px;line-height:10px;font-size:6.1px;color:#141414;left:217.7px;transform:scaleX(0.926);transform-origin:0 50%;">Beginn</div>
<div class="t" style="top:142.30px;height:10px;line-height:10px;font-size:6.1px;color:#141414;left:328.3px;transform:scaleX(0.926);transform-origin:0 50%;">Ende</div>
<svg style="left:279px;top:141px" width="47" height="14"><rect x="1.65" y="1.60" width="42.70" height="9.40" fill="#fff" stroke="#86a9c6" stroke-width="0.65"/></svg>
<svg style="left:364px;top:141px" width="48" height="14"><rect x="1.65" y="1.60" width="43.40" height="9.40" fill="#fff" stroke="#86a9c6" stroke-width="0.65"/></svg>
<div class="t" style="top:154.30px;height:10px;line-height:10px;font-size:6.1px;color:#141414;left:217.7px;transform:scaleX(0.926);transform-origin:0 50%;">Beginn KW</div>
<div class="t" style="top:154.30px;height:10px;line-height:10px;font-size:6.1px;color:#141414;left:328.3px;transform:scaleX(0.926);transform-origin:0 50%;">Ende KW</div>
<svg style="left:279px;top:152px" width="47" height="14"><rect x="1.65" y="2.30" width="42.70" height="9.40" fill="#fff" stroke="#86a9c6" stroke-width="0.65"/></svg>
<svg style="left:364px;top:152px" width="48" height="14"><rect x="1.65" y="2.30" width="43.40" height="9.40" fill="#fff" stroke="#86a9c6" stroke-width="0.65"/></svg>
<div class="t" style="top:165.80px;height:10px;line-height:10px;font-size:6.1px;color:#141414;left:217.7px;transform:scaleX(0.926);transform-origin:0 50%;">Erzeugnis FA-Nr.</div>
<div class="t" style="top:165.80px;height:10px;line-height:10px;font-size:6.1px;color:#141414;left:328.3px;transform:scaleX(0.926);transform-origin:0 50%;">Über FA-Nr.</div>
<svg style="left:279px;top:164px" width="47" height="14"><rect x="1.65" y="1.95" width="42.70" height="9.40" fill="#fff" stroke="#86a9c6" stroke-width="0.65"/></svg>
<svg style="left:364px;top:164px" width="48" height="14"><rect x="1.65" y="1.95" width="43.40" height="9.40" fill="#fff" stroke="#86a9c6" stroke-width="0.65"/></svg>
<div class="t" style="top:177.30px;height:10px;line-height:10px;font-size:6.1px;color:#141414;left:217.7px;transform:scaleX(0.926);transform-origin:0 50%;">Status</div>
<div class="t" style="top:177.30px;height:10px;line-height:10px;font-size:6.1px;color:#141414;left:328.3px;transform:scaleX(0.926);transform-origin:0 50%;">FA-Zeit</div>
<svg style="left:279px;top:175px" width="47" height="14"><rect x="1.65" y="2.30" width="42.70" height="9.40" fill="#fff" stroke="#86a9c6" stroke-width="0.65"/></svg>
<svg style="left:364px;top:175px" width="48" height="14"><rect x="1.65" y="2.30" width="43.40" height="9.40" fill="#efefef" stroke="#86a9c6" stroke-width="0.65"/></svg>
<div class="t" style="top:188.80px;height:10px;line-height:10px;font-size:6.1px;color:#141414;left:217.7px;transform:scaleX(0.926);transform-origin:0 50%;">Materialdeckung</div>
<div class="t" style="top:188.80px;height:10px;line-height:10px;font-size:6.1px;color:#141414;left:328.3px;transform:scaleX(0.926);transform-origin:0 50%;">Berechnet</div>
<svg style="left:279px;top:187px" width="47" height="14"><rect x="1.65" y="2.15" width="42.70" height="9.40" fill="#fff" stroke="#86a9c6" stroke-width="0.65"/></svg>
<svg style="left:364px;top:187px" width="48" height="14"><rect x="1.65" y="2.15" width="43.40" height="9.40" fill="#efefef" stroke="#86a9c6" stroke-width="0.65"/></svg>
<div class="t" style="top:142.40px;height:10px;line-height:10px;font-size:6.1px;color:#141414;left:282.5px;transform:scaleX(0.926);transform-origin:0 50%;">30.05.2018</div>
<div style="left:315.3px;top:143.5px;width:7.3px;height:8px;background:linear-gradient(#ececec,#d6d6d6 50%,#cfcfcf);border-radius:1.2px;box-shadow:0 0 0 0.5px #c4ccd2;"></div>
<svg style="left:317.40000000000003px;top:146.70000000000002px" width="4" height="3" viewBox="0 0 4 3"><path d="M0.2 0.2h3.4L1.9 2.3z" fill="#fbfbfb"/></svg>
<div class="t" style="top:142.40px;height:10px;line-height:10px;font-size:6.1px;color:#141414;left:367.5px;transform:scaleX(0.926);transform-origin:0 50%;">05.06.2018</div>
<div style="left:400.5px;top:143.5px;width:8.3px;height:8px;background:linear-gradient(#ececec,#d6d6d6 50%,#cfcfcf);border-radius:1.2px;box-shadow:0 0 0 0.5px #c4ccd2;"></div>
<svg style="left:403.1px;top:146.70000000000002px" width="4" height="3" viewBox="0 0 4 3"><path d="M0.2 0.2h3.4L1.9 2.3z" fill="#fbfbfb"/></svg>
<div style="left:281.7px;top:166.65px;width:9px;height:8px;background:linear-gradient(#fbfbfb,#dcdcdc);border-radius:1px;box-shadow:0 0 0 0.5px #b9c4cc;"></div>
<svg style="left:282.7px;top:168.15px" width="6" height="5" viewBox="0 0 6 5"><path d="M0.2 1.3h2.6V0.1L5.9 2.5 2.8 4.9V3.7H0.2z" fill="#f5a623" stroke="#f5a623" stroke-width="0.3" stroke-linejoin="round"/></svg>
<div style="left:366.7px;top:166.65px;width:9px;height:8px;background:linear-gradient(#fbfbfb,#dcdcdc);border-radius:1px;box-shadow:0 0 0 0.5px #b9c4cc;"></div>
<svg style="left:367.7px;top:168.15px" width="6" height="5" viewBox="0 0 6 5"><path d="M0.2 1.3h2.6V0.1L5.9 2.5 2.8 4.9V3.7H0.2z" fill="#f5a623" stroke="#f5a623" stroke-width="0.3" stroke-linejoin="round"/></svg>
<div style="left:281.7px;top:178.0px;width:9px;height:8px;background:linear-gradient(#fbfbfb,#dcdcdc);border-radius:1px;box-shadow:0 0 0 0.5px #b9c4cc;"></div>
<svg style="left:282.7px;top:179.5px" width="6" height="5" viewBox="0 0 6 5"><path d="M0.2 1.3h2.6V0.1L5.9 2.5 2.8 4.9V3.7H0.2z" fill="#f5a623" stroke="#f5a623" stroke-width="0.3" stroke-linejoin="round"/></svg>
<div style="left:315.3px;top:178.2px;width:7.3px;height:8px;background:linear-gradient(#ececec,#d6d6d6 50%,#cfcfcf);border-radius:1.2px;box-shadow:0 0 0 0.5px #c4ccd2;"></div>
<svg style="left:317.40000000000003px;top:181.4px" width="4" height="3" viewBox="0 0 4 3"><path d="M0.2 0.2h3.4L1.9 2.3z" fill="#fbfbfb"/></svg>
<div class="t" style="top:177.30px;height:10px;line-height:10px;font-size:6.1px;color:#141414;right:492.5px;text-align:right;transform:scaleX(0.926);transform-origin:100% 50%;">9,801</div>
<div style="left:281.7px;top:189.85px;width:9px;height:8px;background:linear-gradient(#fbfbfb,#dcdcdc);border-radius:1px;box-shadow:0 0 0 0.5px #b9c4cc;"></div>
<svg style="left:282.7px;top:191.35px" width="6" height="5" viewBox="0 0 6 5"><path d="M0.2 1.3h2.6V0.1L5.9 2.5 2.8 4.9V3.7H0.2z" fill="#f5a623" stroke="#f5a623" stroke-width="0.3" stroke-linejoin="round"/></svg>
<div style="left:400.5px;top:190.04999999999998px;width:8.3px;height:8px;background:linear-gradient(#ececec,#d6d6d6 50%,#cfcfcf);border-radius:1.2px;box-shadow:0 0 0 0.5px #c4ccd2;"></div>
<svg style="left:403.1px;top:193.25px" width="4" height="3" viewBox="0 0 4 3"><path d="M0.2 0.2h3.4L1.9 2.3z" fill="#fbfbfb"/></svg>
<div class="t" style="top:196.00px;height:10px;line-height:10px;font-size:6.1px;color:#2d5bd8;left:8.8px;transform:scaleX(0.926);transform-origin:0 50%;">Baugruppendefinition</div>
<svg style="left:75px;top:199px" width="340" height="4" viewBox="0 0 340 4"><path d="M1 2h336.5" stroke="#8fa2ae" stroke-width="0.8"/></svg>
<div class="t" style="top:209.20px;height:10px;line-height:10px;font-size:6.1px;color:#141414;left:8.8px;transform:scaleX(0.926);transform-origin:0 50%;">Artikelnummer</div>
<svg style="left:58px;top:207px" width="55" height="14"><rect x="1.65" y="1.65" width="50.70" height="9.60" fill="#f4f4f8" stroke="#86a9c6" stroke-width="0.65"/></svg>
<div class="t" style="top:208.70px;height:10px;line-height:10px;font-size:6.4px;color:#1a1ae0;font-weight:bold;left:61.5px;width:48.0px;overflow:hidden;">637-12704995n</div>
<div class="t" style="top:209.20px;height:10px;line-height:10px;font-size:6.1px;color:#141414;left:117.3px;transform:scaleX(0.926);transform-origin:0 50%;">Bezeichnung</div>
<svg style="left:162px;top:207px" width="165" height="14"><rect x="1.95" y="1.65" width="160.70" height="9.60" fill="#f4f4f8" stroke="#86a9c6" stroke-width="0.65"/></svg>
<div class="t" style="top:208.70px;height:10px;line-height:10px;font-size:6.4px;color:#1a1ae0;font-weight:bold;left:166px;transform:scaleX(0.904);transform-origin:0 50%;">2GO SCHIENENSTRAHLER MIT 3-PH ADAPTER</div>
<svg style="left:339px;top:210px" width="9" height="9"><rect x="1.70" y="1.45" width="4.90" height="4.70" fill="#fdfdfd" stroke="#a4b4c0" stroke-width="0.6"/><path d="M2.50 3.65l1.3 1.4 2.2-2.8" stroke="#0c0c0c" stroke-width="1.15" fill="none"/></svg>
<div class="t" style="top:209.00px;height:10px;line-height:10px;font-size:6.1px;color:#141414;left:350px;transform:scaleX(0.926);transform-origin:0 50%;">Individuell</div>
<div class="t" style="top:224.90px;height:10px;line-height:10px;font-size:6.1px;color:#141414;left:8.8px;transform:scaleX(0.926);transform-origin:0 50%;">Herstellkosten (Sollverbrauch)</div>
<div class="t" style="top:236.90px;height:10px;line-height:10px;font-size:6.1px;color:#141414;left:8.8px;transform:scaleX(0.926);transform-origin:0 50%;">Herstellkosten (Istverbrauch)</div>
<div class="t" style="top:250.50px;height:10px;line-height:10px;font-size:6.1px;color:#141414;left:8.8px;transform:scaleX(0.926);transform-origin:0 50%;">FA-Menge in Lief.-Meh</div>
<div class="t" style="top:261.80px;height:10px;line-height:10px;font-size:6.1px;color:#141414;left:8.8px;transform:scaleX(0.926);transform-origin:0 50%;">Gesamtmenge in Lief.-Meh</div>
<svg style="left:113px;top:223px" width="47" height="13"><rect x="1.75" y="1.95" width="43.30" height="9.10" fill="#efefef" stroke="#86a9c6" stroke-width="0.65"/></svg>
<div class="t" style="top:224.90px;height:10px;line-height:10px;font-size:6.1px;color:#141414;right:743.7px;text-align:right;transform:scaleX(0.926);transform-origin:100% 50%;">26,7057</div>
<svg style="left:113px;top:235px" width="47" height="13"><rect x="1.75" y="2.25" width="43.30" height="8.90" fill="#efefef" stroke="#86a9c6" stroke-width="0.65"/></svg>
<div class="t" style="top:236.50px;height:10px;line-height:10px;font-size:6.6px;color:#141414;right:751.5px;text-align:right;">,</div>
<svg style="left:113px;top:249px" width="47" height="13"><rect x="1.75" y="2.25" width="43.30" height="8.90" fill="#fff" stroke="#86a9c6" stroke-width="0.65"/></svg>
<div class="t" style="top:250.90px;height:10px;line-height:10px;font-size:6.1px;color:#141414;right:743.7px;text-align:right;transform:scaleX(0.926);transform-origin:100% 50%;">98,000</div>
<svg style="left:113px;top:261px" width="47" height="13"><rect x="1.75" y="2.25" width="43.30" height="8.90" fill="#fff" stroke="#86a9c6" stroke-width="0.65"/></svg>
<div class="t" style="top:262.90px;height:10px;line-height:10px;font-size:6.1px;color:#141414;right:743.7px;text-align:right;transform:scaleX(0.926);transform-origin:100% 50%;">98,000</div>
<div class="t" style="top:224.90px;height:10px;line-height:10px;font-size:6.1px;color:#141414;left:175.6px;transform:scaleX(0.926);transform-origin:0 50%;">Kostenträger</div>
<svg style="left:216px;top:223px" width="47" height="13"><rect x="1.35" y="1.95" width="42.60" height="9.10" fill="#fff" stroke="#86a9c6" stroke-width="0.65"/></svg>
<div style="left:218.5px;top:225.5px;width:9px;height:8px;background:linear-gradient(#fbfbfb,#dcdcdc);border-radius:1px;box-shadow:0 0 0 0.5px #b9c4cc;"></div>
<svg style="left:219.5px;top:227.0px" width="6" height="5" viewBox="0 0 6 5"><path d="M0.2 1.3h2.6V0.1L5.9 2.5 2.8 4.9V3.7H0.2z" fill="#f5a623" stroke="#f5a623" stroke-width="0.3" stroke-linejoin="round"/></svg>
<div style="left:251.7px;top:225.7px;width:8.3px;height:8px;background:linear-gradient(#ececec,#d6d6d6 50%,#cfcfcf);border-radius:1.2px;box-shadow:0 0 0 0.5px #c4ccd2;"></div>
<svg style="left:254.3px;top:228.9px" width="4" height="3" viewBox="0 0 4 3"><path d="M0.2 0.2h3.4L1.9 2.3z" fill="#fbfbfb"/></svg>
<div class="t" style="top:250.50px;height:10px;line-height:10px;font-size:6.1px;color:#141414;left:175.6px;transform:scaleX(0.926);transform-origin:0 50%;">Lager MEH</div>
<svg style="left:216px;top:249px" width="47" height="13"><rect x="1.35" y="2.25" width="42.60" height="8.90" fill="#efefef" stroke="#86a9c6" stroke-width="0.65"/></svg>
<div class="t" style="top:251.00px;height:10px;line-height:10px;font-size:6.1px;color:#141414;left:219.5px;transform:scaleX(0.926);transform-origin:0 50%;">Stk</div>
<div class="t" style="top:261.80px;height:10px;line-height:10px;font-size:6.1px;color:#141414;left:175.6px;transform:scaleX(0.926);transform-origin:0 50%;">Liefer MEH</div>
<svg style="left:216px;top:261px" width="47" height="13"><rect x="1.35" y="2.25" width="42.60" height="8.90" fill="#efefef" stroke="#86a9c6" stroke-width="0.65"/></svg>
<div class="t" style="top:263.00px;height:10px;line-height:10px;font-size:6.1px;color:#141414;left:219.5px;transform:scaleX(0.926);transform-origin:0 50%;">Stk</div>
<div class="t" style="top:224.90px;height:10px;line-height:10px;font-size:6.1px;color:#141414;left:263px;transform:scaleX(0.926);transform-origin:0 50%;">Herstellkosten (Nachkalkulation)</div>
<div class="t" style="top:236.90px;height:10px;line-height:10px;font-size:6.1px;color:#141414;left:263px;transform:scaleX(0.926);transform-origin:0 50%;">Herstellkosten (Manuelle Eingabe)</div>
<div class="t" style="top:250.50px;height:10px;line-height:10px;font-size:6.1px;color:#141414;left:265px;transform:scaleX(0.926);transform-origin:0 50%;">Geplanter Fertigungsbeginn</div>
<div class="t" style="top:261.80px;height:10px;line-height:10px;font-size:6.1px;color:#141414;left:265px;transform:scaleX(0.926);transform-origin:0 50%;">Geplantes Fertigungsende</div>
<svg style="left:367px;top:223px" width="47" height="13"><rect x="1.75" y="1.95" width="43.30" height="9.10" fill="#efefef" stroke="#86a9c6" stroke-width="0.65"/></svg>
<div class="t" style="top:224.30px;height:10px;line-height:10px;font-size:6.6px;color:#141414;right:502.5px;text-align:right;">,</div>
<svg style="left:367px;top:235px" width="47" height="13"><rect x="1.75" y="2.25" width="43.30" height="8.90" fill="#fff" stroke="#86a9c6" stroke-width="0.65"/></svg>
<div class="t" style="top:236.50px;height:10px;line-height:10px;font-size:6.6px;color:#141414;right:502.5px;text-align:right;">,</div>
<svg style="left:367px;top:249px" width="47" height="13"><rect x="1.75" y="2.25" width="43.30" height="8.90" fill="#efefef" stroke="#86a9c6" stroke-width="0.65"/></svg>
<div style="left:403.5px;top:251.89999999999998px;width:8.3px;height:8px;background:linear-gradient(#ececec,#d6d6d6 50%,#cfcfcf);border-radius:1.2px;box-shadow:0 0 0 0.5px #c4ccd2;"></div>
<svg style="left:406.1px;top:255.1px" width="4" height="3" viewBox="0 0 4 3"><path d="M0.2 0.2h3.4L1.9 2.3z" fill="#fbfbfb"/></svg>
<svg style="left:367px;top:261px" width="47" height="13"><rect x="1.75" y="2.25" width="43.30" height="8.90" fill="#fff" stroke="#86a9c6" stroke-width="0.65"/></svg>
<div class="t" style="top:263.10px;height:10px;line-height:10px;font-size:6.1px;color:#141414;left:370.5px;transform:scaleX(0.926);transform-origin:0 50%;">05.06.2018</div>
<div style="left:403.5px;top:263.9px;width:8.3px;height:8px;background:linear-gradient(#ececec,#d6d6d6 50%,#cfcfcf);border-radius:1.2px;box-shadow:0 0 0 0.5px #c4ccd2;"></div>
<svg style="left:406.1px;top:267.09999999999997px" width="4" height="3" viewBox="0 0 4 3"><path d="M0.2 0.2h3.4L1.9 2.3z" fill="#fbfbfb"/></svg>
<div style="left:0px;top:2px;width:1.4px;height:286px;background:linear-gradient(90deg,#c3cfde,#d6dfea);"></div>
<div style="left:422.7px;top:2px;width:1.7px;height:286px;background:#d5dde8;"></div>
<div style="left:424.3px;top:2px;width:1.7px;height:286px;background:linear-gradient(90deg,#959595,#a6a6a6);"></div>
<div style="left:0px;top:286px;width:426px;height:1.3px;background:#c2ccd8;"></div>
<div style="left:0px;top:287.3px;width:426px;height:1.2px;background:#6e7074;"></div>
<div style="left:0px;top:288.7px;width:425px;height:260px;background:#c4d2e2;"></div>
<div style="left:1px;top:289px;width:423px;height:12.5px;background:linear-gradient(#e6ecf2 0%,#d2dce8 50%,#dbe5f1 100%);"></div>
<div style="left:1px;top:301.5px;width:423px;height:14.5px;background:linear-gradient(#c1d7f9,#bad2f7);"></div>
<div style="left:1px;top:301.5px;width:203px;height:14.5px;background:linear-gradient(#d8e6fb 0%,#bfd5f6 40%,#a4c1ed 78%,#86a7df 100%);"></div>
<div style="left:204px;top:302.5px;width:48px;height:11.5px;background:#fff;"></div>
<div style="left:1px;top:316px;width:422px;height:229.5px;background:#fff;"></div>
<svg style="left:1px;top:291px" width="9" height="8" viewBox="0 0 9 8"><path d="M1.2 1.4v6.4M3.4 1.4v6.4M5.6 1.4v6.4M7.8 1.4v6.4" stroke="#5c646e" stroke-width="1.1"/><path d="M0.5 1.6h8" stroke="#6c747e" stroke-width="0.8"/><path d="M1.2 0.3v1M3.4 0.3v1M5.6 0.3v1M7.8 0.3v1" stroke="#8a929c" stroke-width="0.8"/></svg>
<div class="t" style="top:290.80px;height:10px;line-height:10px;font-size:6.7px;color:#70757d;left:12px;transform:scaleX(0.910);transform-origin:0 50%;">Positionen  -  Dokument Nr. L327976 | * Layout 0</div>
<svg style="left:370px;top:291.8px" width="54" height="7.699999999999989"><rect x="1.70" y="0.3" width="15.00" height="7.10" rx="1.3" fill="#dde5ef" stroke="#b4bfce" stroke-width="0.7"/><rect x="19.00" y="0.3" width="15.10" height="7.10" rx="1.3" fill="#dde5ef" stroke="#b4bfce" stroke-width="0.7"/><rect x="36.50" y="0.3" width="14.90" height="7.10" rx="1.3" fill="#dde5ef" stroke="#b4bfce" stroke-width="0.7"/><rect x="6.300000000000011" y="4.15" width="5.6" height="2.1" rx="0.9" fill="#f4f6f9" stroke="#929caa" stroke-width="0.6"/><rect x="23.80000000000001" y="1.25" width="5.6" height="4.6" rx="1" fill="#f4f6f9" stroke="#929caa" stroke-width="0.6"/><path d="M26.600000000000023 2.25v2.8M25.19999999999999 3.65h2.8" stroke="#929caa" stroke-width="0.7"/><path d="M41.59999999999998 1.65L46.199999999999974 6.05M46.199999999999974 1.65L41.59999999999998 6.05" stroke="#929caa" stroke-width="2" stroke-linecap="round"/><path d="M41.59999999999998 1.65L46.199999999999974 6.05M46.199999999999974 1.65L41.59999999999998 6.05" stroke="#f6f8fa" stroke-width="0.9" stroke-linecap="round"/></svg>
<svg style="left:3px;top:304.0px" width="8" height="9" viewBox="0 0 7 8"><path d="M0.5 0.5h4l2 2v5h-6z" fill="#e6effc" stroke="#8d9ebd" stroke-width="0.7"/><path d="M4.5 0.5v2h2" fill="#7aa0e0" stroke="#6f8fcf" stroke-width="0.4"/></svg>
<svg style="left:12.8px;top:307.5px" width="3" height="2" viewBox="0 0 3 2"><path d="M0 0h3L1.5 2z" fill="#222"/></svg>
<svg style="left:19px;top:305.0px" width="7" height="7" viewBox="0 0 7 7"><path d="M0.7 0.7L6.3 6.3M6.3 0.7L0.7 6.3" stroke="#e02030" stroke-width="1.05"/></svg>
<svg style="left:32px;top:304.5px" width="8" height="8" viewBox="0 0 8 8"><rect x="0.3" y="0.3" width="7.4" height="7.4" rx="0.6" fill="#4646c8"/><rect x="1.6" y="0.6" width="4.6" height="3" fill="#e8ecff"/><rect x="2.2" y="5" width="3.4" height="2.7" fill="#1c1c50"/><rect x="4.3" y="5.5" width="1" height="1.8" fill="#eee"/></svg>
<svg style="left:44px;top:304.5px" width="9" height="8" viewBox="0 0 9 8"><rect x="0.3" y="0.3" width="6.4" height="6.4" rx="0.6" fill="#4646c8"/><rect x="1.4" y="0.6" width="4" height="2.6" fill="#e8ecff"/><rect x="4.5" y="3.5" width="4" height="4.3" fill="#f0c830" stroke="#a08820" stroke-width="0.4"/></svg>
<svg style="left:56px;top:304.5px" width="9" height="8" viewBox="0 0 9 8"><rect x="0.5" y="2.5" width="5.5" height="5" fill="#d4dcf4" stroke="#7080b0" stroke-width="0.5"/><path d="M2 6L8 0.8" stroke="#e03030" stroke-width="1"/><path d="M3 1h4" stroke="#6080e0" stroke-width="1"/></svg>
<svg style="left:66.5px;top:307.5px" width="3" height="2" viewBox="0 0 3 2"><path d="M0 0h3L1.5 2z" fill="#222"/></svg>
<svg style="left:72.5px;top:304.5px" width="8" height="8" viewBox="0 0 8 8"><rect x="1.5" y="2" width="6" height="5.5" fill="#d8d8d8" stroke="#a8a8a8" stroke-width="0.5"/><path d="M0.5 2.5L3 0.5l1 2" stroke="#999" stroke-width="0.7" fill="none"/></svg>
<div style="left:83.5px;top:303.5px;width:1px;height:10px;background:#a9bee0;opacity:.7;"></div>
<div style="left:84.5px;top:303.5px;width:1px;height:10px;background:#e8f0fc;opacity:.8;"></div>
<svg style="left:88px;top:305.0px" width="8" height="7" viewBox="0 0 8 7"><path d="M0.3 1h1.2M2.4 1h5.3M0.3 3.5h1.2M2.4 3.5h5.3M0.3 6h1.2M2.4 6h5.3" stroke="#3a3a44" stroke-width="1"/></svg>
<svg style="left:100px;top:304.5px" width="8" height="8" viewBox="0 0 8 8"><circle cx="4" cy="4" r="3.8" fill="#1c6fd8"/><circle cx="3.4" cy="3" r="2" fill="#5aa6f0" opacity="0.7"/><rect x="3.5" y="3.2" width="1.1" height="3" fill="#fff"/><rect x="3.5" y="1.6" width="1.1" height="1.1" fill="#fff"/></svg>
<svg style="left:113px;top:304.5px" width="8" height="8" viewBox="0 0 8 8"><rect x="0.3" y="0.3" width="7.4" height="7.4" fill="#b4b4b4" stroke="#8a8a8a" stroke-width="0.5"/><path d="M4 1.5L6.3 4H4.8v2.4H3.2V4H1.7z" fill="#f0f0f0"/></svg>
<svg style="left:125.5px;top:304.5px" width="8" height="8" viewBox="0 0 8 8"><rect x="0.3" y="0.3" width="7.4" height="7.4" fill="#b4b4b4" stroke="#8a8a8a" stroke-width="0.5"/><path d="M4 6.5L6.3 4H4.8V1.6H3.2V4H1.7z" fill="#f0f0f0"/></svg>
<svg style="left:137px;top:304.0px" width="9" height="9" viewBox="0 0 9 9"><rect x="0.3" y="0.3" width="8.4" height="8.4" fill="#3fae48" stroke="#23802c" stroke-width="0.6"/><path d="M4.5 1.2v6.6M1.2 4.5h6.6M2.2 2.2l4.6 4.6M6.8 2.2L2.2 6.8" stroke="#d8f4d8" stroke-width="0.7" opacity=".85"/><circle cx="4.5" cy="4.5" r="1.1" fill="#3fae48"/></svg>
<svg style="left:147.2px;top:307.5px" width="3" height="2" viewBox="0 0 3 2"><path d="M0 0h3L1.5 2z" fill="#222"/></svg>
<div style="left:151.5px;top:303.5px;width:1px;height:10px;background:#a9bee0;opacity:.7;"></div>
<div style="left:152.5px;top:303.5px;width:1px;height:10px;background:#e8f0fc;opacity:.8;"></div>
<svg style="left:156px;top:304.5px" width="8" height="8" viewBox="0 0 8 8"><circle cx="3.6" cy="4.4" r="3" fill="#e4e8ee" stroke="#b8bec8" stroke-width="0.5"/><path d="M2 4l1.6 2L7 0.8" stroke="#9a9aa4" stroke-width="0.9" fill="none"/></svg>
<svg style="left:168px;top:304.5px" width="9" height="8" viewBox="0 0 9 8"><path d="M1 7.5L6 2.5" stroke="#b07a30" stroke-width="1.3"/><path d="M2.5 1l3.5 3.5" stroke="#c03030" stroke-width="1.4"/><path d="M8 7.5L4 3.5" stroke="#9aa3ad" stroke-width="1"/></svg>
<div class="t" style="top:303.60px;height:10px;line-height:10px;font-size:6px;color:#141414;left:180px;">Suchen</div>
<div style="left:1px;top:316px;width:421.6px;height:11.3px;background:linear-gradient(#fafafc 0%,#ececf2 30%,#d4d4e2 65%,#c2c2d6 92%,#dcdce8 100%);"></div>
<div style="left:10.5px;top:327.3px;width:412px;height:10.4px;background:linear-gradient(#dfe8f8 0%,#a8c0ea 40%,#4f7fd6 70%,#3a6cd0 100%);"></div>
<div style="left:1px;top:327.3px;width:9.5px;height:124.80000000000001px;background:linear-gradient(90deg,#c4c4d8,#e8e8f0);"></div>
<div style="left:1px;top:327.3px;width:9.5px;height:10.4px;background:linear-gradient(#e4e8f4,#a8b8dc);"></div>
<svg style="left:4px;top:330.3px" width="3" height="5" viewBox="0 0 3 5"><path d="M0 0v5l3-2.5z" fill="#111"/></svg>
<div style="left:10.5px;top:337.5px;width:412px;height:1px;background:#b9c9dc;opacity:0.3;"></div>
<div style="left:1px;top:337.5px;width:9.5px;height:1px;background:repeating-linear-gradient(90deg,#8fa6c8 0 1.5px,transparent 1.5px 3px);opacity:.45;"></div>
<div style="left:10.5px;top:347.5px;width:412px;height:1px;background:#b9c9dc;opacity:0.9;"></div>
<div style="left:1px;top:347.5px;width:9.5px;height:1px;background:repeating-linear-gradient(90deg,#8fa6c8 0 1.5px,transparent 1.5px 3px);opacity:.45;"></div>
<div style="left:10.5px;top:357.5px;width:412px;height:1px;background:#b9c9dc;opacity:0.9;"></div>
<div style="left:1px;top:357.5px;width:9.5px;height:1px;background:repeating-linear-gradient(90deg,#8fa6c8 0 1.5px,transparent 1.5px 3px);opacity:.45;"></div>
<div style="left:10.5px;top:368.5px;width:412px;height:1px;background:#b9c9dc;opacity:0.9;"></div>
<div style="left:1px;top:368.5px;width:9.5px;height:1px;background:repeating-linear-gradient(90deg,#8fa6c8 0 1.5px,transparent 1.5px 3px);opacity:.45;"></div>
<div style="left:10.5px;top:378.5px;width:412px;height:1px;background:#b9c9dc;opacity:0.9;"></div>
<div style="left:1px;top:378.5px;width:9.5px;height:1px;background:repeating-linear-gradient(90deg,#8fa6c8 0 1.5px,transparent 1.5px 3px);opacity:.45;"></div>
<div style="left:10.5px;top:389.5px;width:412px;height:1px;background:#b9c9dc;opacity:0.9;"></div>
<div style="left:1px;top:389.5px;width:9.5px;height:1px;background:repeating-linear-gradient(90deg,#8fa6c8 0 1.5px,transparent 1.5px 3px);opacity:.45;"></div>
<div style="left:10.5px;top:399.5px;width:412px;height:1px;background:#b9c9dc;opacity:0.9;"></div>
<div style="left:1px;top:399.5px;width:9.5px;height:1px;background:repeating-linear-gradient(90deg,#8fa6c8 0 1.5px,transparent 1.5px 3px);opacity:.45;"></div>
<div style="left:10.5px;top:409.5px;width:412px;height:1px;background:#b9c9dc;opacity:0.9;"></div>
<div style="left:1px;top:409.5px;width:9.5px;height:1px;background:repeating-linear-gradient(90deg,#8fa6c8 0 1.5px,transparent 1.5px 3px);opacity:.45;"></div>
<div style="left:10.5px;top:420.5px;width:412px;height:1px;background:#b9c9dc;opacity:0.9;"></div>
<div style="left:1px;top:420.5px;width:9.5px;height:1px;background:repeating-linear-gradient(90deg,#8fa6c8 0 1.5px,transparent 1.5px 3px);opacity:.45;"></div>
<div style="left:10.5px;top:430.5px;width:412px;height:1px;background:#b9c9dc;opacity:0.9;"></div>
<div style="left:1px;top:430.5px;width:9.5px;height:1px;background:repeating-linear-gradient(90deg,#8fa6c8 0 1.5px,transparent 1.5px 3px);opacity:.45;"></div>
<div style="left:10.5px;top:441.5px;width:412px;height:1px;background:#b9c9dc;opacity:0.9;"></div>
<div style="left:1px;top:441.5px;width:9.5px;height:1px;background:repeating-linear-gradient(90deg,#8fa6c8 0 1.5px,transparent 1.5px 3px);opacity:.45;"></div>
<div style="left:10.5px;top:451.5px;width:412px;height:1px;background:#b9c9dc;opacity:0.9;"></div>
<div style="left:1px;top:451.5px;width:9.5px;height:1px;background:repeating-linear-gradient(90deg,#8fa6c8 0 1.5px,transparent 1.5px 3px);opacity:.45;"></div>
<div style="left:42px;top:316px;width:1px;height:11.3px;background:#7e7e98;"></div>
<div style="left:43px;top:316px;width:1px;height:11.3px;background:#f8f8fc;opacity:.7;"></div>
<div style="left:42px;top:337.7px;width:1px;height:114.4px;background:#b9c9dc;"></div>
<div style="left:42px;top:327.3px;width:1px;height:10.4px;background:rgba(255,255,255,.35);"></div>
<div class="t" style="top:316.80px;height:10px;line-height:10px;font-size:6.1px;color:#141414;left:13.5px;transform:scaleX(0.926);transform-origin:0 50%;">Pos. Nr.</div>
<svg style="left:37.5px;top:321px" width="3" height="2" viewBox="0 0 3 2"><path d="M0 0h3L1.5 2z" fill="#222"/></svg>
<div style="left:57px;top:316px;width:1px;height:11.3px;background:#7e7e98;"></div>
<div style="left:58px;top:316px;width:1px;height:11.3px;background:#f8f8fc;opacity:.7;"></div>
<div style="left:57px;top:337.7px;width:1px;height:114.4px;background:#b9c9dc;"></div>
<div style="left:57px;top:327.3px;width:1px;height:10.4px;background:rgba(255,255,255,.35);"></div>
<div class="t" style="top:316.80px;height:10px;line-height:10px;font-size:6.1px;color:#141414;left:44.7px;transform:scaleX(0.852);transform-origin:0 50%;">BG</div>
<svg style="left:52.5px;top:321px" width="3" height="2" viewBox="0 0 3 2"><path d="M0 0h3L1.5 2z" fill="#222"/></svg>
<div style="left:110px;top:316px;width:1px;height:11.3px;background:#7e7e98;"></div>
<div style="left:111px;top:316px;width:1px;height:11.3px;background:#f8f8fc;opacity:.7;"></div>
<div style="left:110px;top:337.7px;width:1px;height:114.4px;background:#b9c9dc;"></div>
<div style="left:110px;top:327.3px;width:1px;height:10.4px;background:rgba(255,255,255,.35);"></div>
<div class="t" style="top:316.80px;height:10px;line-height:10px;font-size:6.1px;color:#141414;left:-18.099999999999994px;width:200px;text-align:center;transform:scaleX(0.926);transform-origin:50% 50%;">Nummer</div>
<svg style="left:105.3px;top:321px" width="3" height="2" viewBox="0 0 3 2"><path d="M0 0h3L1.5 2z" fill="#222"/></svg>
<div style="left:183px;top:316px;width:1px;height:11.3px;background:#7e7e98;"></div>
<div style="left:184px;top:316px;width:1px;height:11.3px;background:#f8f8fc;opacity:.7;"></div>
<div style="left:183px;top:337.7px;width:1px;height:114.4px;background:#b9c9dc;"></div>
<div style="left:183px;top:327.3px;width:1px;height:10.4px;background:rgba(255,255,255,.35);"></div>
<div class="t" style="top:316.80px;height:10px;line-height:10px;font-size:6.1px;color:#141414;left:44.80000000000001px;width:200px;text-align:center;transform:scaleX(0.926);transform-origin:50% 50%;">Bezeichnung 1</div>
<svg style="left:178.3px;top:321px" width="3" height="2" viewBox="0 0 3 2"><path d="M0 0h3L1.5 2z" fill="#222"/></svg>
<div style="left:214px;top:316px;width:1px;height:11.3px;background:#7e7e98;"></div>
<div style="left:215px;top:316px;width:1px;height:11.3px;background:#f8f8fc;opacity:.7;"></div>
<div style="left:214px;top:337.7px;width:1px;height:114.4px;background:#b9c9dc;"></div>
<div style="left:214px;top:327.3px;width:1px;height:10.4px;background:rgba(255,255,255,.35);"></div>
<div class="t" style="top:316.80px;height:10px;line-height:10px;font-size:6.1px;color:#141414;left:97.0px;width:200px;text-align:center;transform:scaleX(0.926);transform-origin:50% 50%;">Menge</div>
<svg style="left:209.7px;top:321px" width="3" height="2" viewBox="0 0 3 2"><path d="M0 0h3L1.5 2z" fill="#222"/></svg>
<div style="left:267px;top:316px;width:1px;height:11.3px;background:#7e7e98;"></div>
<div style="left:268px;top:316px;width:1px;height:11.3px;background:#f8f8fc;opacity:.7;"></div>
<div style="left:267px;top:337.7px;width:1px;height:114.4px;background:#b9c9dc;"></div>
<div style="left:267px;top:327.3px;width:1px;height:10.4px;background:rgba(255,255,255,.35);"></div>
<div class="t" style="top:316.80px;height:10px;line-height:10px;font-size:6.1px;color:#141414;left:139.04999999999998px;width:200px;text-align:center;transform:scaleX(0.926);transform-origin:50% 50%;">Menge/Prod.EH</div>
<svg style="left:262.4px;top:321px" width="3" height="2" viewBox="0 0 3 2"><path d="M0 0h3L1.5 2z" fill="#222"/></svg>
<div style="left:298px;top:316px;width:1px;height:11.3px;background:#7e7e98;"></div>
<div style="left:299px;top:316px;width:1px;height:11.3px;background:#f8f8fc;opacity:.7;"></div>
<div style="left:298px;top:337.7px;width:1px;height:114.4px;background:#b9c9dc;"></div>
<div style="left:298px;top:327.3px;width:1px;height:10.4px;background:rgba(255,255,255,.35);"></div>
<div class="t" style="top:316.80px;height:10px;line-height:10px;font-size:6.1px;color:#141414;left:181.04999999999995px;width:200px;text-align:center;transform:scaleX(0.926);transform-origin:50% 50%;">MEH</div>
<svg style="left:293.7px;top:321px" width="3" height="2" viewBox="0 0 3 2"><path d="M0 0h3L1.5 2z" fill="#222"/></svg>
<div style="left:319px;top:316px;width:1px;height:11.3px;background:#7e7e98;"></div>
<div style="left:320px;top:316px;width:1px;height:11.3px;background:#f8f8fc;opacity:.7;"></div>
<div style="left:319px;top:337.7px;width:1px;height:114.4px;background:#b9c9dc;"></div>
<div style="left:319px;top:327.3px;width:1px;height:10.4px;background:rgba(255,255,255,.35);"></div>
<div class="t" style="top:316.80px;height:10px;line-height:10px;font-size:6.1px;color:#141414;left:207.0px;width:200px;text-align:center;transform:scaleX(0.926);transform-origin:50% 50%;">Typ</div>
<svg style="left:314.3px;top:321px" width="3" height="2" viewBox="0 0 3 2"><path d="M0 0h3L1.5 2z" fill="#222"/></svg>
<div style="left:366px;top:316px;width:1px;height:11.3px;background:#7e7e98;"></div>
<div style="left:367px;top:316px;width:1px;height:11.3px;background:#f8f8fc;opacity:.7;"></div>
<div style="left:366px;top:337.7px;width:1px;height:114.4px;background:#b9c9dc;"></div>
<div style="left:366px;top:327.3px;width:1px;height:10.4px;background:rgba(255,255,255,.35);"></div>
<div class="t" style="top:316.80px;height:10px;line-height:10px;font-size:6.1px;color:#141414;left:240.8px;width:200px;text-align:center;transform:scaleX(0.926);transform-origin:50% 50%;">Entnahmelager</div>
<svg style="left:361.3px;top:321px" width="3" height="2" viewBox="0 0 3 2"><path d="M0 0h3L1.5 2z" fill="#222"/></svg>
<div style="left:422px;top:316px;width:1px;height:11.3px;background:#7e7e98;"></div>
<div style="left:423px;top:316px;width:1px;height:11.3px;background:#f8f8fc;opacity:.7;"></div>
<div style="left:422px;top:337.7px;width:1px;height:114.4px;background:#b9c9dc;"></div>
<div style="left:422px;top:327.3px;width:1px;height:10.4px;background:rgba(255,255,255,.35);"></div>
<div class="t" style="top:316.80px;height:10px;line-height:10px;font-size:6.1px;color:#141414;left:292.45000000000005px;width:200px;text-align:center;transform:scaleX(0.926);transform-origin:50% 50%;">Entnahmelagerort</div>
<svg style="left:417.6px;top:321px" width="3" height="2" viewBox="0 0 3 2"><path d="M0 0h3L1.5 2z" fill="#222"/></svg>
<div style="left:10px;top:316px;width:1px;height:11.3px;background:#7c7c94;"></div>
<div style="left:10px;top:327.3px;width:1px;height:124.80000000000001px;background:#b9c9dc;"></div>
<div style="left:1px;top:326.8px;width:421.6px;height:1px;background:#8c8ca4;opacity:.7;"></div>
<div class="t" style="top:326.60px;height:10px;line-height:10px;font-size:6.4px;color:#0a0a18;font-weight:bold;left:13.5px;">1</div>
<div style="left:47px;top:329.8px;width:6px;height:6px;background:#fff;box-shadow:0 0 0 0.5px #a0acc4;"></div>
<div style="left:58.5px;top:327.6px;width:9px;height:8px;background:linear-gradient(#fbfbfb,#dcdcdc);border-radius:1px;box-shadow:0 0 0 0.5px #b9c4cc;"></div>
<svg style="left:59.5px;top:329.1px" width="6" height="5" viewBox="0 0 6 5"><path d="M0.2 1.3h2.6V0.1L5.9 2.5 2.8 4.9V3.7H0.2z" fill="#f5a623" stroke="#f5a623" stroke-width="0.3" stroke-linejoin="round"/></svg>
<div class="t" style="top:326.60px;height:10px;line-height:10px;font-size:6.4px;color:#0a0a18;font-weight:bold;left:71px;">637,100,55</div>
<div class="t" style="top:326.60px;height:10px;line-height:10px;font-size:6.4px;color:#0a0a18;font-weight:bold;left:113px;width:79.3px;overflow:hidden;transform:scaleX(0.870);transform-origin:0 50%;">2 GO STRAHLERKÖRPE</div>
<div class="t" style="top:326.60px;height:10px;line-height:10px;font-size:6.4px;color:#0a0a18;font-weight:bold;right:686.7px;text-align:right;">98,000</div>
<div class="t" style="top:326.60px;height:10px;line-height:10px;font-size:6.4px;color:#0a0a18;font-weight:bold;right:634.5px;text-align:right;">1,000000</div>
<div class="t" style="top:326.60px;height:10px;line-height:10px;font-size:6.4px;color:#0a0a18;font-weight:bold;left:269.5px;">Stk</div>
<div class="t" style="top:326.60px;height:10px;line-height:10px;font-size:6.4px;color:#0a0a18;font-weight:bold;left:301.5px;">MAT</div>
<div style="left:320.5px;top:327.6px;width:9px;height:8px;background:linear-gradient(#fbfbfb,#dcdcdc);border-radius:1px;box-shadow:0 0 0 0.5px #b9c4cc;"></div>
<svg style="left:321.5px;top:329.1px" width="6" height="5" viewBox="0 0 6 5"><path d="M0.2 1.3h2.6V0.1L5.9 2.5 2.8 4.9V3.7H0.2z" fill="#f5a623" stroke="#f5a623" stroke-width="0.3" stroke-linejoin="round"/></svg>
<div class="t" style="top:326.60px;height:10px;line-height:10px;font-size:6.4px;color:#0a0a18;font-weight:bold;left:333px;">100</div>
<div style="left:367.5px;top:327.6px;width:9px;height:8px;background:linear-gradient(#fbfbfb,#dcdcdc);border-radius:1px;box-shadow:0 0 0 0.5px #b9c4cc;"></div>
<svg style="left:368.5px;top:329.1px" width="6" height="5" viewBox="0 0 6 5"><path d="M0.2 1.3h2.6V0.1L5.9 2.5 2.8 4.9V3.7H0.2z" fill="#f5a623" stroke="#f5a623" stroke-width="0.3" stroke-linejoin="round"/></svg>
<div class="t" style="top:337.50px;height:10px;line-height:10px;font-size:6.1px;color:#1c1c1c;left:13.5px;transform:scaleX(0.926);transform-origin:0 50%;">2</div>
<div style="left:46.5px;top:339.9px;width:5px;height:5px;background:#fff;border-top:1px solid #8c8c8c;border-left:1px solid #8c8c8c;"></div>
<div class="t" style="top:337.50px;height:10px;line-height:10px;font-size:6.1px;color:#141414;left:60.5px;transform:scaleX(0.926);transform-origin:0 50%;">637,10,0</div>
<div class="t" style="top:337.50px;height:10px;line-height:10px;font-size:6.1px;color:#1c1c1c;left:113px;width:80.1px;overflow:hidden;transform:scaleX(0.861);transform-origin:0 50%;">2 GO FEDERBÜGEL</div>
<div class="t" style="top:337.50px;height:10px;line-height:10px;font-size:6.1px;color:#1c1c1c;right:686.7px;text-align:right;transform:scaleX(0.926);transform-origin:100% 50%;">196,000</div>
<div class="t" style="top:337.50px;height:10px;line-height:10px;font-size:6.1px;color:#1c1c1c;right:634.5px;text-align:right;transform:scaleX(0.926);transform-origin:100% 50%;">2,000000</div>
<div class="t" style="top:337.50px;height:10px;line-height:10px;font-size:6.1px;color:#1c1c1c;left:269.5px;transform:scaleX(0.926);transform-origin:0 50%;">Stk</div>
<div class="t" style="top:337.50px;height:10px;line-height:10px;font-size:6.1px;color:#1c1c1c;left:301.5px;transform:scaleX(0.926);transform-origin:0 50%;">MAT</div>
<div class="t" style="top:337.50px;height:10px;line-height:10px;font-size:6.1px;color:#141414;left:323px;transform:scaleX(0.926);transform-origin:0 50%;">100</div>
<div class="t" style="top:347.90px;height:10px;line-height:10px;font-size:6.1px;color:#1c1c1c;left:13.5px;transform:scaleX(0.926);transform-origin:0 50%;">3</div>
<div style="left:46.5px;top:350.3px;width:5px;height:5px;background:#fff;border-top:1px solid #8c8c8c;border-left:1px solid #8c8c8c;"></div>
<div class="t" style="top:347.90px;height:10px;line-height:10px;font-size:6.1px;color:#141414;left:60.5px;transform:scaleX(0.926);transform-origin:0 50%;">637,200,55</div>
<div class="t" style="top:347.90px;height:10px;line-height:10px;font-size:6.1px;color:#1c1c1c;left:113px;width:80.1px;overflow:hidden;transform:scaleX(0.861);transform-origin:0 50%;">2 GO FIXIERRING WS</div>
<div class="t" style="top:347.90px;height:10px;line-height:10px;font-size:6.1px;color:#1c1c1c;right:686.7px;text-align:right;transform:scaleX(0.926);transform-origin:100% 50%;">98,000</div>
<div class="t" style="top:347.90px;height:10px;line-height:10px;font-size:6.1px;color:#1c1c1c;right:634.5px;text-align:right;transform:scaleX(0.926);transform-origin:100% 50%;">1,000000</div>
<div class="t" style="top:347.90px;height:10px;line-height:10px;font-size:6.1px;color:#1c1c1c;left:269.5px;transform:scaleX(0.926);transform-origin:0 50%;">Stk</div>
<div class="t" style="top:347.90px;height:10px;line-height:10px;font-size:6.1px;color:#1c1c1c;left:301.5px;transform:scaleX(0.926);transform-origin:0 50%;">MAT</div>
<div class="t" style="top:347.90px;height:10px;line-height:10px;font-size:6.1px;color:#141414;left:323px;transform:scaleX(0.926);transform-origin:0 50%;">100</div>
<div class="t" style="top:358.30px;height:10px;line-height:10px;font-size:6.1px;color:#1c1c1c;left:13.5px;transform:scaleX(0.926);transform-origin:0 50%;">4</div>
<div style="left:46.5px;top:360.7px;width:5px;height:5px;background:#fff;border-top:1px solid #8c8c8c;border-left:1px solid #8c8c8c;"></div>
<svg style="left:47.5px;top:361.3px" width="4" height="4" viewBox="0 0 4 4"><path d="M0.5 1.8L1.6 3.1L3.6 0.6" stroke="#111" stroke-width="1" fill="none"/></svg>
<div class="t" style="top:358.30px;height:10px;line-height:10px;font-size:6.1px;color:#141414;left:60.5px;transform:scaleX(0.926);transform-origin:0 50%;">637,400,55</div>
<div class="t" style="top:358.30px;height:10px;line-height:10px;font-size:6.1px;color:#1c1c1c;left:113px;width:80.1px;overflow:hidden;transform:scaleX(0.861);transform-origin:0 50%;">2 GO BÜGEL WS</div>
<div class="t" style="top:358.30px;height:10px;line-height:10px;font-size:6.1px;color:#1c1c1c;right:686.7px;text-align:right;transform:scaleX(0.926);transform-origin:100% 50%;">98,000</div>
<div class="t" style="top:358.30px;height:10px;line-height:10px;font-size:6.1px;color:#1c1c1c;right:634.5px;text-align:right;transform:scaleX(0.926);transform-origin:100% 50%;">1,000000</div>
<div class="t" style="top:358.30px;height:10px;line-height:10px;font-size:6.1px;color:#1c1c1c;left:269.5px;transform:scaleX(0.926);transform-origin:0 50%;">Stk</div>
<div class="t" style="top:358.30px;height:10px;line-height:10px;font-size:6.1px;color:#1c1c1c;left:301.5px;transform:scaleX(0.926);transform-origin:0 50%;">MAT</div>
<div class="t" style="top:358.30px;height:10px;line-height:10px;font-size:6.1px;color:#141414;left:323px;transform:scaleX(0.926);transform-origin:0 50%;">100</div>
<div class="t" style="top:368.70px;height:10px;line-height:10px;font-size:6.1px;color:#1c1c1c;left:13.5px;transform:scaleX(0.926);transform-origin:0 50%;">5</div>
<div style="left:46.5px;top:371.1px;width:5px;height:5px;background:#fff;border-top:1px solid #8c8c8c;border-left:1px solid #8c8c8c;"></div>
<div class="t" style="top:368.70px;height:10px;line-height:10px;font-size:6.1px;color:#141414;left:60.5px;transform:scaleX(0.926);transform-origin:0 50%;">637,5,5</div>
<div class="t" style="top:368.70px;height:10px;line-height:10px;font-size:6.1px;color:#1c1c1c;left:113px;width:80.1px;overflow:hidden;transform:scaleX(0.861);transform-origin:0 50%;">2 GO EVG DECKEL WS</div>
<div class="t" style="top:368.70px;height:10px;line-height:10px;font-size:6.1px;color:#1c1c1c;right:686.7px;text-align:right;transform:scaleX(0.926);transform-origin:100% 50%;">98,000</div>
<div class="t" style="top:368.70px;height:10px;line-height:10px;font-size:6.1px;color:#1c1c1c;right:634.5px;text-align:right;transform:scaleX(0.926);transform-origin:100% 50%;">1,000000</div>
<div class="t" style="top:368.70px;height:10px;line-height:10px;font-size:6.1px;color:#1c1c1c;left:269.5px;transform:scaleX(0.926);transform-origin:0 50%;">Stk</div>
<div class="t" style="top:368.70px;height:10px;line-height:10px;font-size:6.1px;color:#1c1c1c;left:301.5px;transform:scaleX(0.926);transform-origin:0 50%;">MAT</div>
<div class="t" style="top:368.70px;height:10px;line-height:10px;font-size:6.1px;color:#141414;left:323px;transform:scaleX(0.926);transform-origin:0 50%;">100</div>
<div class="t" style="top:379.10px;height:10px;line-height:10px;font-size:6.1px;color:#1c1c1c;left:13.5px;transform:scaleX(0.926);transform-origin:0 50%;">6</div>
<div style="left:46.5px;top:381.5px;width:5px;height:5px;background:#fff;border-top:1px solid #8c8c8c;border-left:1px solid #8c8c8c;"></div>
<div class="t" style="top:379.10px;height:10px;line-height:10px;font-size:6.1px;color:#141414;left:60.5px;transform:scaleX(0.926);transform-origin:0 50%;">30-417806</div>
<div class="t" style="top:379.10px;height:10px;line-height:10px;font-size:6.1px;color:#1c1c1c;left:113px;width:80.1px;overflow:hidden;transform:scaleX(0.861);transform-origin:0 50%;">XITANIUM KONVERTER</div>
<div class="t" style="top:379.10px;height:10px;line-height:10px;font-size:6.1px;color:#1c1c1c;right:686.7px;text-align:right;transform:scaleX(0.926);transform-origin:100% 50%;">98,000</div>
<div class="t" style="top:379.10px;height:10px;line-height:10px;font-size:6.1px;color:#1c1c1c;right:634.5px;text-align:right;transform:scaleX(0.926);transform-origin:100% 50%;">1,000000</div>
<div class="t" style="top:379.10px;height:10px;line-height:10px;font-size:6.1px;color:#1c1c1c;left:269.5px;transform:scaleX(0.926);transform-origin:0 50%;">Stk</div>
<div class="t" style="top:379.10px;height:10px;line-height:10px;font-size:6.1px;color:#1c1c1c;left:301.5px;transform:scaleX(0.926);transform-origin:0 50%;">MAT</div>
<div class="t" style="top:379.10px;height:10px;line-height:10px;font-size:6.1px;color:#141414;left:323px;transform:scaleX(0.926);transform-origin:0 50%;">100</div>
<div class="t" style="top:389.50px;height:10px;line-height:10px;font-size:6.1px;color:#1c1c1c;left:13.5px;transform:scaleX(0.926);transform-origin:0 50%;">7</div>
<div style="left:46.5px;top:391.90000000000003px;width:5px;height:5px;background:#fff;border-top:1px solid #8c8c8c;border-left:1px solid #8c8c8c;"></div>
<div class="t" style="top:389.50px;height:10px;line-height:10px;font-size:6.1px;color:#141414;left:60.5px;transform:scaleX(0.926);transform-origin:0 50%;">d2015</div>
<div class="t" style="top:389.50px;height:10px;line-height:10px;font-size:6.1px;color:#1c1c1c;left:113px;width:80.1px;overflow:hidden;transform:scaleX(0.861);transform-origin:0 50%;">REFLEKTOR WIDE FLOOD</div>
<div class="t" style="top:389.50px;height:10px;line-height:10px;font-size:6.1px;color:#1c1c1c;right:686.7px;text-align:right;transform:scaleX(0.926);transform-origin:100% 50%;">98,000</div>
<div class="t" style="top:389.50px;height:10px;line-height:10px;font-size:6.1px;color:#1c1c1c;right:634.5px;text-align:right;transform:scaleX(0.926);transform-origin:100% 50%;">1,000000</div>
<div class="t" style="top:389.50px;height:10px;line-height:10px;font-size:6.1px;color:#1c1c1c;left:269.5px;transform:scaleX(0.926);transform-origin:0 50%;">Stk</div>
<div class="t" style="top:389.50px;height:10px;line-height:10px;font-size:6.1px;color:#1c1c1c;left:301.5px;transform:scaleX(0.926);transform-origin:0 50%;">MAT</div>
<div class="t" style="top:389.50px;height:10px;line-height:10px;font-size:6.1px;color:#141414;left:323px;transform:scaleX(0.926);transform-origin:0 50%;">100</div>
<div class="t" style="top:399.90px;height:10px;line-height:10px;font-size:6.1px;color:#1c1c1c;left:13.5px;transform:scaleX(0.926);transform-origin:0 50%;">8</div>
<div style="left:46.5px;top:402.3px;width:5px;height:5px;background:#fff;border-top:1px solid #8c8c8c;border-left:1px solid #8c8c8c;"></div>
<div class="t" style="top:399.90px;height:10px;line-height:10px;font-size:6.1px;color:#141414;left:60.5px;transform:scaleX(0.926);transform-origin:0 50%;">d2043</div>
<div class="t" style="top:399.90px;height:10px;line-height:10px;font-size:6.1px;color:#1c1c1c;left:113px;width:80.1px;overflow:hidden;transform:scaleX(0.861);transform-origin:0 50%;">LED HOLDER GO LIGHT C</div>
<div class="t" style="top:399.90px;height:10px;line-height:10px;font-size:6.1px;color:#1c1c1c;right:686.7px;text-align:right;transform:scaleX(0.926);transform-origin:100% 50%;">98,000</div>
<div class="t" style="top:399.90px;height:10px;line-height:10px;font-size:6.1px;color:#1c1c1c;right:634.5px;text-align:right;transform:scaleX(0.926);transform-origin:100% 50%;">1,000000</div>
<div class="t" style="top:399.90px;height:10px;line-height:10px;font-size:6.1px;color:#1c1c1c;left:269.5px;transform:scaleX(0.926);transform-origin:0 50%;">Stk</div>
<div class="t" style="top:399.90px;height:10px;line-height:10px;font-size:6.1px;color:#1c1c1c;left:301.5px;transform:scaleX(0.926);transform-origin:0 50%;">MAT</div>
<div class="t" style="top:399.90px;height:10px;line-height:10px;font-size:6.1px;color:#141414;left:323px;transform:scaleX(0.926);transform-origin:0 50%;">100</div>
<div class="t" style="top:410.30px;height:10px;line-height:10px;font-size:6.1px;color:#1c1c1c;left:13.5px;transform:scaleX(0.926);transform-origin:0 50%;">9</div>
<div style="left:46.5px;top:412.7px;width:5px;height:5px;background:#fff;border-top:1px solid #8c8c8c;border-left:1px solid #8c8c8c;"></div>
<svg style="left:47.5px;top:413.3px" width="4" height="4" viewBox="0 0 4 4"><path d="M0.5 1.8L1.6 3.1L3.6 0.6" stroke="#111" stroke-width="1" fill="none"/></svg>
<div class="t" style="top:410.30px;height:10px;line-height:10px;font-size:6.1px;color:#141414;left:60.5px;transform:scaleX(0.926);transform-origin:0 50%;">cob0001,9530p</div>
<div class="t" style="top:410.30px;height:10px;line-height:10px;font-size:6.1px;color:#1c1c1c;left:113px;width:80.1px;overflow:hidden;transform:scaleX(0.861);transform-origin:0 50%;">CITIZEN LED NG6 CLU038</div>
<div class="t" style="top:410.30px;height:10px;line-height:10px;font-size:6.1px;color:#1c1c1c;right:686.7px;text-align:right;transform:scaleX(0.926);transform-origin:100% 50%;">98,000</div>
<div class="t" style="top:410.30px;height:10px;line-height:10px;font-size:6.1px;color:#1c1c1c;right:634.5px;text-align:right;transform:scaleX(0.926);transform-origin:100% 50%;">1,000000</div>
<div class="t" style="top:410.30px;height:10px;line-height:10px;font-size:6.1px;color:#1c1c1c;left:269.5px;transform:scaleX(0.926);transform-origin:0 50%;">Stk</div>
<div class="t" style="top:410.30px;height:10px;line-height:10px;font-size:6.1px;color:#1c1c1c;left:301.5px;transform:scaleX(0.926);transform-origin:0 50%;">MAT</div>
<div class="t" style="top:410.30px;height:10px;line-height:10px;font-size:6.1px;color:#141414;left:323px;transform:scaleX(0.926);transform-origin:0 50%;">100</div>
<div class="t" style="top:420.70px;height:10px;line-height:10px;font-size:6.1px;color:#1c1c1c;left:13.5px;transform:scaleX(0.926);transform-origin:0 50%;">11</div>
<div style="left:46.5px;top:423.1px;width:5px;height:5px;background:#fff;border-top:1px solid #8c8c8c;border-left:1px solid #8c8c8c;"></div>
<div class="t" style="top:420.70px;height:10px;line-height:10px;font-size:6.1px;color:#141414;left:60.5px;transform:scaleX(0.926);transform-origin:0 50%;">v261</div>
<div class="t" style="top:420.70px;height:10px;line-height:10px;font-size:6.1px;color:#1c1c1c;left:113px;width:80.1px;overflow:hidden;transform:scaleX(0.861);transform-origin:0 50%;">FALTKARTON STR 2GO 24</div>
<div class="t" style="top:420.70px;height:10px;line-height:10px;font-size:6.1px;color:#1c1c1c;right:686.7px;text-align:right;transform:scaleX(0.926);transform-origin:100% 50%;">98,000</div>
<div class="t" style="top:420.70px;height:10px;line-height:10px;font-size:6.1px;color:#1c1c1c;right:634.5px;text-align:right;transform:scaleX(0.926);transform-origin:100% 50%;">1,000000</div>
<div class="t" style="top:420.70px;height:10px;line-height:10px;font-size:6.1px;color:#1c1c1c;left:269.5px;transform:scaleX(0.926);transform-origin:0 50%;">Stk</div>
<div class="t" style="top:420.70px;height:10px;line-height:10px;font-size:6.1px;color:#1c1c1c;left:301.5px;transform:scaleX(0.926);transform-origin:0 50%;">MAT</div>
<div class="t" style="top:420.70px;height:10px;line-height:10px;font-size:6.1px;color:#141414;left:323px;transform:scaleX(0.926);transform-origin:0 50%;">100</div>
<div class="t" style="top:431.10px;height:10px;line-height:10px;font-size:6.1px;color:#1c1c1c;left:13.5px;transform:scaleX(0.926);transform-origin:0 50%;">1</div>
<div style="left:46.5px;top:433.5px;width:5px;height:5px;background:#fff;border-top:1px solid #8c8c8c;border-left:1px solid #8c8c8c;"></div>
<div class="t" style="top:431.10px;height:10px;line-height:10px;font-size:6.1px;color:#141414;left:60.5px;transform:scaleX(0.926);transform-origin:0 50%;">13</div>
<div class="t" style="top:431.10px;height:10px;line-height:10px;font-size:6.1px;color:#1c1c1c;left:113px;width:74.5px;overflow:hidden;transform:scaleX(0.926);transform-origin:0 50%;">Team 3 (2Go)</div>
<div class="t" style="top:431.10px;height:10px;line-height:10px;font-size:6.1px;color:#1c1c1c;right:686.7px;text-align:right;transform:scaleX(0.926);transform-origin:100% 50%;">588,000</div>
<div class="t" style="top:431.10px;height:10px;line-height:10px;font-size:6.1px;color:#1c1c1c;right:634.5px;text-align:right;transform:scaleX(0.926);transform-origin:100% 50%;">6,000000</div>
<div class="t" style="top:431.10px;height:10px;line-height:10px;font-size:6.1px;color:#1c1c1c;left:269.5px;transform:scaleX(0.926);transform-origin:0 50%;">Min</div>
<div class="t" style="top:431.10px;height:10px;line-height:10px;font-size:6.1px;color:#1c1c1c;left:301.5px;transform:scaleX(0.926);transform-origin:0 50%;">KST</div>
<div class="t" style="top:441.50px;height:10px;line-height:10px;font-size:6.1px;color:#1c1c1c;left:13.5px;transform:scaleX(0.926);transform-origin:0 50%;">8</div>
<div style="left:46.5px;top:443.90000000000003px;width:5px;height:5px;background:#fff;border-top:1px solid #8c8c8c;border-left:1px solid #8c8c8c;"></div>
<div class="t" style="top:441.50px;height:10px;line-height:10px;font-size:6.1px;color:#141414;left:60.5px;transform:scaleX(0.926);transform-origin:0 50%;">70</div>
<div class="t" style="top:441.50px;height:10px;line-height:10px;font-size:6.1px;color:#1c1c1c;left:113px;width:74.5px;overflow:hidden;transform:scaleX(0.926);transform-origin:0 50%;">Kommissionierung</div>
<div class="t" style="top:441.50px;height:10px;line-height:10px;font-size:6.1px;color:#1c1c1c;right:686.7px;text-align:right;transform:scaleX(0.926);transform-origin:100% 50%;">0,054</div>
<div class="t" style="top:441.50px;height:10px;line-height:10px;font-size:6.1px;color:#1c1c1c;right:634.5px;text-align:right;transform:scaleX(0.926);transform-origin:100% 50%;">0,000551</div>
<div class="t" style="top:441.50px;height:10px;line-height:10px;font-size:6.1px;color:#1c1c1c;left:269.5px;transform:scaleX(0.926);transform-origin:0 50%;">Min</div>
<div class="t" style="top:441.50px;height:10px;line-height:10px;font-size:6.1px;color:#1c1c1c;left:301.5px;transform:scaleX(0.926);transform-origin:0 50%;">KST</div>
<div style="left:1px;top:537.2px;width:421.5px;height:8.6px;background:#f6f6f6;"></div>
<div style="left:4.5px;top:537.2px;width:8.5px;height:7.6px;background:#f0f0f0;border-left:1px solid #444;border-bottom:1px solid #444;border-right:1px solid #444;"></div>
<svg style="left:7px;top:540px" width="3" height="3" viewBox="0 0 3 3"><path d="M3 0v3L0.5 1.5z" fill="#bbb"/></svg>
<div style="left:14px;top:537.2px;width:106.5px;height:7.6px;background:linear-gradient(#ececec,#c6c6c6 55%,#e2e2e2);border-right:1px solid #555;border-bottom:1px solid #666;"></div>
<div style="left:413.5px;top:537.2px;width:7.5px;height:7.6px;background:#ececec;border-right:1px solid #333;border-bottom:1px solid #333;"></div>
<svg style="left:416px;top:540px" width="3" height="3" viewBox="0 0 3 3"><path d="M0 0v3L2.5 1.5z" fill="#bbb"/></svg>
<div style="left:0px;top:289px;width:1.3px;height:259px;background:linear-gradient(#d6dfea 0,#d6dfea 12px,#a9bbd6 13px,#9fb2d0 27px,#8fa0ba 28px);"></div>
<div style="left:422.3px;top:289px;width:2px;height:257px;background:#d4e2f4;"></div>
<div style="left:424.2px;top:289px;width:1px;height:259px;background:#5a5e66;"></div>
<div style="left:0px;top:545.5px;width:424.5px;height:2px;background:#d4e0f0;"></div>
<div style="left:0px;top:547.5px;width:425px;height:1.5px;background:#5c5c5c;"></div>
<div style="left:424.3px;top:0px;width:476px;height:267.6px;background:rgba(70,70,70,0.5);border-radius:0 0 2px 2px;"></div>
<div style="left:425px;top:266.5px;width:475px;height:6.5px;background:linear-gradient(rgba(40,40,40,0.85),rgba(50,50,50,0.6) 25%,rgba(60,60,60,0.28) 55%,rgba(80,80,80,0));"></div>
<div style="left:425.6px;top:0px;width:474.4px;height:267px;background:#484848;border-radius:0 0 2px 2px;"></div>
<div style="left:426.6px;top:0px;width:472px;height:266.5px;background:linear-gradient(#b9d9f8 0%,#8cc0f0 35%,#68a5e3 75%,#5b9bdd 100%);border-radius:0 0 1.5px 1.5px;"></div>
<div style="left:428px;top:0px;width:469px;height:13.5px;background:linear-gradient(90deg,#cfe4f9 0%,#b4d6f7 9%,#84bbf0 24%,#70aeec 50%,#7cb6ee 72%,#a4cff6 100%);"></div>
<div style="left:427px;top:0px;width:471px;height:1px;background:linear-gradient(#5a6474,#9fc4ea);opacity:.8;"></div>
<div style="left:428px;top:12.8px;width:469px;height:1px;background:#6a9cd8;opacity:.75;"></div>
<div style="left:428.5px;top:14px;width:468px;height:15px;background:linear-gradient(90deg,#a8c2f2,#b0ccf5 45%,#c0d8f9 100%);"></div>
<div style="left:428px;top:14.4px;width:114px;height:13.4px;background:linear-gradient(#a6aab6 0%,#70747e 24%,#2e3036 50%,#0c0c0e 74%,#000 100%);border-radius:0 0 2px 1px;"></div>
<div style="left:428.6px;top:28.7px;width:468.2px;height:236px;background:#add8e6;"></div>
<svg style="left:428.3px;top:2.6px" width="9" height="9.4" viewBox="0 0 9 9.4"><rect x="0.2" y="0.2" width="8.4" height="8.8" rx="1.6" fill="#ee1c1c"/><path d="M1.8 1.2h1.4v3.6H1.8zM3.8 1.2h3.2v3.4H5.6L5 7.6 4 7.3z" fill="#fff"/></svg>
<div class="t" style="top:2.60px;height:10px;line-height:10px;font-size:6.8px;color:#16181c;left:439.8px;transform:scaleX(0.895);transform-origin:0 50%;">Defekte Teile</div>
<div style="left:844px;top:0px;width:53px;height:10.6px;background:#5c6c80;border-radius:0 0 2.5px 2.5px;"></div>
<div style="left:844.7px;top:0px;width:13.2px;height:9.9px;background:linear-gradient(#d6e6f7 0%,#b8d2ee 45%,#8fb6e0 50%,#b5d4f3 100%);border-radius:0 0 0 2px;"></div>
<div style="left:858.7px;top:0px;width:13px;height:9.9px;background:linear-gradient(#d6e6f7 0%,#b8d2ee 45%,#8fb6e0 50%,#b5d4f3 100%);"></div>
<div style="left:872.5px;top:0px;width:23.8px;height:9.9px;background:linear-gradient(#e8a99d 0%,#d8705c 45%,#c43c22 50%,#d7634a 100%);border-radius:0 0 2px 0;"></div>
<svg style="left:848.5px;top:5.2px" width="7" height="4" viewBox="0 0 7 4"><rect x="0.4" y="0.6" width="5.4" height="2" rx="0.6" fill="#fff" stroke="#56606c" stroke-width="0.6"/></svg>
<svg style="left:862.2px;top:2.8px" width="7" height="6" viewBox="0 0 7 6"><rect x="0.6" y="0.6" width="5" height="4.4" rx="0.5" fill="#fff" stroke="#56606c" stroke-width="0.6"/><rect x="2" y="2" width="2.2" height="1.4" fill="#6c7684"/></svg>
<svg style="left:881.3px;top:2.4px" width="7" height="6" viewBox="0 0 7 6"><path d="M1 0.8L5.6 5.2M5.6 0.8L1 5.2" stroke="#5a3028" stroke-width="2.2"/><path d="M1 0.8L5.6 5.2M5.6 0.8L1 5.2" stroke="#fff" stroke-width="1.1"/></svg>
<div style="left:426.6px;top:0px;width:472px;height:1.2px;background:#363c46;opacity:.9;"></div>
<svg style="left:431.5px;top:17px" width="7" height="8" viewBox="0 0 7 8"><rect x="0.3" y="0.3" width="6.2" height="7.4" fill="#f4f8f4"/><path d="M1.8 2.6c1.4-1.4 3.2 0 2 1.4L1.8 6.2h3" stroke="#18a020" stroke-width="1.1" fill="none"/></svg>
<svg style="left:444.5px;top:17px" width="8" height="8" viewBox="0 0 8 8"><path d="M0.5 0.5h4.4l2 2v5H0.5z" fill="#e8f0ec"/><path d="M1.6 4.6h2.6V3.2L7.2 5.4 4.2 7.6V6.2H1.6z" fill="#30b040"/></svg>
<svg style="left:456.5px;top:17px" width="8" height="8" viewBox="0 0 8 8"><rect x="0.3" y="0.3" width="7.4" height="7.4" rx="0.6" fill="#5050d0"/><rect x="1.6" y="0.6" width="4.6" height="3" fill="#e8ecff"/><rect x="2.2" y="5" width="3.4" height="2.7" fill="#1c1c50"/><rect x="4.3" y="5.5" width="1" height="1.8" fill="#eee"/></svg>
<div style="left:468px;top:16.5px;width:0.8px;height:9px;background:#6e7c9a;"></div>
<svg style="left:472px;top:17px" width="9" height="8" viewBox="0 0 9 8"><rect x="0.5" y="2.5" width="5.5" height="5" fill="#303848" stroke="#586078" stroke-width="0.5"/><path d="M2 6L7.6 1" stroke="#d03030" stroke-width="1"/><path d="M3.4 0.8c2-1 4 0.4 4.4 2" stroke="#3a78e8" stroke-width="1.3" fill="none"/></svg>
<div style="left:484px;top:16.5px;width:0.8px;height:9px;background:#6e7c9a;"></div>
<svg style="left:488px;top:17px" width="9" height="8" viewBox="0 0 9 8"><circle cx="4.4" cy="4" r="2.6" fill="none" stroke="#5a6a80" stroke-width="1.8"/><circle cx="4.4" cy="4" r="3.4" fill="none" stroke="#4a5a70" stroke-width="0.8" stroke-dasharray="1.2 1"/></svg>
<svg style="left:501px;top:17.5px" width="7" height="7" viewBox="0 0 7 7"><circle cx="3.5" cy="3.5" r="3.3" fill="#2a74e0"/><circle cx="3" cy="2.6" r="1.8" fill="#6ab0f4" opacity="0.7"/><path d="M2.6 2.4c0.4-1 2-0.8 1.8 0.2-0.2 0.8-0.9 0.8-0.9 1.6" stroke="#fff" stroke-width="0.8" fill="none"/><rect x="3.1" y="4.9" width="0.8" height="0.8" fill="#fff"/></svg>
<svg style="left:512px;top:17px" width="8" height="8" viewBox="0 0 8 8"><rect x="2" y="0.3" width="4" height="3" fill="#f0f0f0" stroke="#999" stroke-width="0.4"/><rect x="0.4" y="2.8" width="7.2" height="3.6" rx="0.8" fill="#a4a4a4" stroke="#787878" stroke-width="0.5"/><rect x="1.8" y="5.4" width="4.4" height="2.2" fill="#ddd" stroke="#999" stroke-width="0.4"/></svg>
<svg style="left:521.7px;top:20px" width="3" height="2" viewBox="0 0 3 2"><path d="M0 0h3L1.5 2z" fill="#d8d8d8"/></svg>
<div style="left:526.5px;top:16.5px;width:0.8px;height:9px;background:#6e7c9a;"></div>
<svg style="left:531px;top:18px" width="8" height="6" viewBox="0 0 8 6"><path d="M0.5 4L4.6 0.5l3 1.6L3.4 5.6z" fill="#fafafa" stroke="#b8b8b8" stroke-width="0.5"/></svg>
<div class="t" style="top:32.60px;height:10px;line-height:10px;font-size:6.1px;color:#141414;left:435.8px;transform:scaleX(0.926);transform-origin:0 50%;">FA-Nummer</div>
<svg style="left:485px;top:31px" width="82" height="13"><rect x="1.35" y="1.85" width="77.70" height="9.30" fill="#fff" stroke="#86a9c6" stroke-width="0.65"/></svg>
<div style="left:487.5px;top:33.5px;width:8px;height:8px;background:linear-gradient(#f6f6f6,#d8d8d8);border-radius:1px;"></div>
<svg style="left:489px;top:34.5px" width="5" height="6" viewBox="0 0 5 6"><path d="M1.2 0.5v5M3.8 0.5v5" stroke="#222" stroke-width="1"/><path d="M1.2 1L3.8 5" stroke="#2a6de0" stroke-width="1"/></svg>
<div class="t" style="top:32.80px;height:10px;line-height:10px;font-size:6.1px;color:#141414;left:498.5px;transform:scaleX(0.926);transform-origin:0 50%;">L327976</div>
<div class="t" style="top:46.40px;height:10px;line-height:10px;font-size:6.1px;color:#141414;left:435.8px;transform:scaleX(0.926);transform-origin:0 50%;">Artikelnummer</div>
<svg style="left:485px;top:45px" width="82" height="14"><rect x="1.35" y="1.55" width="77.70" height="9.60" fill="#efefef" stroke="#86a9c6" stroke-width="0.65"/></svg>
<div class="t" style="top:46.60px;height:10px;line-height:10px;font-size:6.4px;color:#1a1ae0;font-weight:bold;left:488.5px;">637-12704995nkd6</div>
<svg style="left:622px;top:31px" width="82" height="13"><rect x="1.55" y="1.85" width="77.50" height="9.30" fill="#f4f4f8" stroke="#86a9c6" stroke-width="0.65"/></svg>
<div class="t" style="top:32.80px;height:10px;line-height:10px;font-size:6.4px;color:#1a1ae0;font-weight:bold;left:625.5px;transform:scaleX(0.903);transform-origin:0 50%;">2GO STR-EUR SYS 27W</div>
<div class="t" style="top:46.40px;height:10px;line-height:10px;font-size:6.1px;color:#141414;left:573px;transform:scaleX(0.926);transform-origin:0 50%;">Bezeichnung</div>
<svg style="left:622px;top:45px" width="82" height="14"><rect x="1.55" y="1.55" width="77.50" height="9.60" fill="#f4f4f8" stroke="#86a9c6" stroke-width="0.65"/></svg>
<div class="t" style="top:46.60px;height:10px;line-height:10px;font-size:6.4px;color:#1a1ae0;font-weight:bold;left:625.5px;transform:scaleX(0.887);transform-origin:0 50%;">2GO SCHIENENSTRAHLE</div>
<div class="t" style="top:46.40px;height:10px;line-height:10px;font-size:6.1px;color:#141414;left:724px;transform:scaleX(0.926);transform-origin:0 50%;">Gesamtmenge</div>
<svg style="left:784px;top:45px" width="49" height="14"><rect x="1.65" y="1.55" width="44.70" height="9.60" fill="#efefef" stroke="#86a9c6" stroke-width="0.65"/></svg>
<div class="t" style="top:46.60px;height:10px;line-height:10px;font-size:6.1px;color:#141414;right:71.5px;text-align:right;transform:scaleX(0.926);transform-origin:100% 50%;">98,000</div>
<div class="t" style="top:62.50px;height:10px;line-height:10px;font-size:6.1px;color:#2d5bd8;left:435.8px;transform:scaleX(0.926);transform-origin:0 50%;">Auskunft produzierbar</div>
<svg style="left:494px;top:67px" width="107" height="4" viewBox="0 0 107 4"><path d="M1 2.3h104" stroke="#8fa2ae" stroke-width="0.8"/></svg>
<div class="t" style="top:76.30px;height:10px;line-height:10px;font-size:6.1px;color:#141414;left:435.8px;transform:scaleX(0.926);transform-origin:0 50%;">Lager</div>
<svg style="left:485px;top:75px" width="82" height="13"><rect x="1.35" y="1.95" width="77.70" height="9.10" fill="#fff" stroke="#86a9c6" stroke-width="0.65"/></svg>
<div style="left:553.5px;top:78px;width:9.5px;height:8px;background:linear-gradient(#f4f4f4,#d4d4d4);border-radius:1px;"></div>
<svg style="left:555.5px;top:79.5px" width="6" height="5" viewBox="0 0 6 5"><path d="M0.6 2.4L2.2 4.2L5.4 0.6" stroke="#2a2a90" stroke-width="1.1" fill="none"/></svg>
<svg style="left:485px;top:91px" width="9" height="9"><rect x="1.30" y="1.35" width="4.90" height="4.70" fill="#fdfdfd" stroke="#a4b4c0" stroke-width="0.6"/></svg>
<div class="t" style="top:89.90px;height:10px;line-height:10px;font-size:7.9px;color:#8a9298;left:496.8px;">Produzierbar</div>
<svg style="left:623px;top:78px" width="9" height="9"><rect x="1.30" y="1.55" width="4.90" height="4.70" fill="#fdfdfd" stroke="#a4b4c0" stroke-width="0.6"/></svg>
<div class="t" style="top:77.10px;height:10px;line-height:10px;font-size:6.1px;color:#141414;left:632.8px;transform:scaleX(0.926);transform-origin:0 50%;">Keine Prüfung für "Ohne Produktionslagerumbuchung"</div>
<svg style="left:623px;top:91px" width="9" height="9"><rect x="1.30" y="1.35" width="4.90" height="4.70" fill="#fdfdfd" stroke="#a4b4c0" stroke-width="0.6"/></svg>
<div class="t" style="top:89.90px;height:10px;line-height:10px;font-size:6.1px;color:#141414;left:632.8px;transform:scaleX(0.926);transform-origin:0 50%;">Keine Prüfung für "Ohne Verbrauchsbuchung"</div>
<div style="left:428.7px;top:104.5px;width:467.5px;height:10.8px;background:linear-gradient(#efeff5 0%,#dfdfea 40%,#c8c8da 75%,#babace 100%);"></div>
<div style="left:428.7px;top:104px;width:467.5px;height:1px;background:#8a8aa0;opacity:.6;"></div>
<div class="t" style="top:105.20px;height:10px;line-height:10px;font-size:6.1px;color:#141414;left:562px;width:200px;text-align:center;transform:scaleX(0.926);transform-origin:50% 50%;">Positionen</div>
<div style="left:428.7px;top:115.3px;width:459px;height:11px;background:linear-gradient(#fafafc 0%,#ececf2 30%,#d4d4e2 65%,#c2c2d6 92%,#dcdce8 100%);"></div>
<div style="left:428.7px;top:115px;width:467.5px;height:1px;background:#8a8aa0;opacity:.6;"></div>
<div style="left:428.7px;top:126.3px;width:459px;height:53px;background:#fff;"></div>
<div style="left:428.7px;top:126.3px;width:10px;height:53px;background:linear-gradient(90deg,#c4c4d8,#e8e8f0);"></div>
<div style="left:438.7px;top:136.5px;width:449px;height:1px;background:#b9c9dc;"></div>
<div style="left:428.7px;top:136.5px;width:10px;height:1px;background:repeating-linear-gradient(90deg,#8fa6c8 0 1.5px,transparent 1.5px 3px);opacity:.45;"></div>
<div style="left:438.7px;top:147.5px;width:449px;height:1px;background:#b9c9dc;"></div>
<div style="left:428.7px;top:147.5px;width:10px;height:1px;background:repeating-linear-gradient(90deg,#8fa6c8 0 1.5px,transparent 1.5px 3px);opacity:.45;"></div>
<div style="left:438.7px;top:158.5px;width:449px;height:1px;background:#b9c9dc;"></div>
<div style="left:428.7px;top:158.5px;width:10px;height:1px;background:repeating-linear-gradient(90deg,#8fa6c8 0 1.5px,transparent 1.5px 3px);opacity:.45;"></div>
<div style="left:438.7px;top:169.5px;width:449px;height:1px;background:#b9c9dc;"></div>
<div style="left:428.7px;top:169.5px;width:10px;height:1px;background:repeating-linear-gradient(90deg,#8fa6c8 0 1.5px,transparent 1.5px 3px);opacity:.45;"></div>
<div style="left:438px;top:115.3px;width:1px;height:11px;background:#84849c;"></div>
<div style="left:438.2px;top:126.3px;width:1px;height:52.2px;background:#b9c9dc;"></div>
<div style="left:479px;top:115.3px;width:1px;height:11px;background:#84849c;"></div>
<div style="left:480px;top:115.3px;width:1px;height:11px;background:#f8f8fc;"></div>
<div style="left:479.5px;top:126.3px;width:1px;height:52.2px;background:#b9c9dc;"></div>
<div class="t" style="top:116.00px;height:10px;line-height:10px;font-size:6.1px;color:#141414;left:357.15px;width:200px;text-align:center;transform:scaleX(0.926);transform-origin:50% 50%;">Pos. Nr.</div>
<svg style="left:474.6px;top:120.3px" width="3" height="2" viewBox="0 0 3 2"><path d="M0 0h3L1.5 2z" fill="#222"/></svg>
<div style="left:529px;top:115.3px;width:1px;height:11px;background:#84849c;"></div>
<div style="left:530px;top:115.3px;width:1px;height:11px;background:#f8f8fc;"></div>
<div style="left:529.5px;top:126.3px;width:1px;height:52.2px;background:#b9c9dc;"></div>
<div class="t" style="top:116.00px;height:10px;line-height:10px;font-size:6.1px;color:#141414;left:402.65000000000003px;width:200px;text-align:center;transform:scaleX(0.926);transform-origin:50% 50%;">Artikelnummer</div>
<svg style="left:524.7px;top:120.3px" width="3" height="2" viewBox="0 0 3 2"><path d="M0 0h3L1.5 2z" fill="#222"/></svg>
<div style="left:579px;top:115.3px;width:1px;height:11px;background:#84849c;"></div>
<div style="left:580px;top:115.3px;width:1px;height:11px;background:#f8f8fc;"></div>
<div style="left:579.5px;top:126.3px;width:1px;height:52.2px;background:#b9c9dc;"></div>
<div class="t" style="top:116.00px;height:10px;line-height:10px;font-size:6.1px;color:#141414;left:452.70000000000005px;width:200px;text-align:center;transform:scaleX(0.926);transform-origin:50% 50%;">Bezeichnung</div>
<svg style="left:574.7px;top:120.3px" width="3" height="2" viewBox="0 0 3 2"><path d="M0 0h3L1.5 2z" fill="#222"/></svg>
<div style="left:629px;top:115.3px;width:1px;height:11px;background:#84849c;"></div>
<div style="left:630px;top:115.3px;width:1px;height:11px;background:#f8f8fc;"></div>
<div style="left:629.5px;top:126.3px;width:1px;height:52.2px;background:#b9c9dc;"></div>
<div class="t" style="top:116.00px;height:10px;line-height:10px;font-size:6.1px;color:#141414;left:503.1px;width:200px;text-align:center;transform:scaleX(0.926);transform-origin:50% 50%;">Langtext</div>
<svg style="left:625.5px;top:120.3px" width="3" height="2" viewBox="0 0 3 2"><path d="M0 0h3L1.5 2z" fill="#222"/></svg>
<div style="left:679px;top:115.3px;width:1px;height:11px;background:#84849c;"></div>
<div style="left:680px;top:115.3px;width:1px;height:11px;background:#f8f8fc;"></div>
<div style="left:679.5px;top:126.3px;width:1px;height:52.2px;background:#b9c9dc;"></div>
<div class="t" style="top:116.00px;height:10px;line-height:10px;font-size:6.1px;color:#141414;left:553.1px;width:200px;text-align:center;transform:scaleX(0.926);transform-origin:50% 50%;">Gesamtmenge</div>
<svg style="left:674.7px;top:120.3px" width="3" height="2" viewBox="0 0 3 2"><path d="M0 0h3L1.5 2z" fill="#222"/></svg>
<div style="left:721px;top:115.3px;width:1px;height:11px;background:#84849c;"></div>
<div style="left:722px;top:115.3px;width:1px;height:11px;background:#f8f8fc;"></div>
<div style="left:721.5px;top:126.3px;width:1px;height:52.2px;background:#b9c9dc;"></div>
<div class="t" style="top:116.00px;height:10px;line-height:10px;font-size:6.1px;color:#141414;left:598.6500000000001px;width:200px;text-align:center;transform:scaleX(0.926);transform-origin:50% 50%;">Umgebucht</div>
<svg style="left:716.6px;top:120.3px" width="3" height="2" viewBox="0 0 3 2"><path d="M0 0h3L1.5 2z" fill="#222"/></svg>
<div style="left:762px;top:115.3px;width:1px;height:11px;background:#84849c;"></div>
<div style="left:763px;top:115.3px;width:1px;height:11px;background:#f8f8fc;"></div>
<div style="left:762.5px;top:126.3px;width:1px;height:52.2px;background:#b9c9dc;"></div>
<div class="t" style="top:116.00px;height:10px;line-height:10px;font-size:6.1px;color:#141414;left:640.1px;width:200px;text-align:center;transform:scaleX(0.926);transform-origin:50% 50%;">Verbraucht</div>
<svg style="left:757.6px;top:120.3px" width="3" height="2" viewBox="0 0 3 2"><path d="M0 0h3L1.5 2z" fill="#222"/></svg>
<div style="left:808px;top:115.3px;width:1px;height:11px;background:#84849c;"></div>
<div style="left:809px;top:115.3px;width:1px;height:11px;background:#f8f8fc;"></div>
<div style="left:808.5px;top:126.3px;width:1px;height:52.2px;background:#b9c9dc;"></div>
<div class="t" style="top:116.00px;height:10px;line-height:10px;font-size:6.1px;color:#141414;left:683.75px;width:200px;text-align:center;transform:scaleX(0.926);transform-origin:50% 50%;">Fehlermenge</div>
<svg style="left:803.9px;top:120.3px" width="3" height="2" viewBox="0 0 3 2"><path d="M0 0h3L1.5 2z" fill="#222"/></svg>
<div style="left:849px;top:115.3px;width:1px;height:11px;background:#84849c;"></div>
<div style="left:850px;top:115.3px;width:1px;height:11px;background:#f8f8fc;"></div>
<div style="left:849.5px;top:126.3px;width:1px;height:52.2px;background:#b9c9dc;"></div>
<div class="t" style="top:116.00px;height:10px;line-height:10px;font-size:6.1px;color:#141414;left:727.2px;width:200px;text-align:center;transform:scaleX(0.926);transform-origin:50% 50%;">Stk/Liste</div>
<svg style="left:844.5px;top:120.3px" width="3" height="2" viewBox="0 0 3 2"><path d="M0 0h3L1.5 2z" fill="#222"/></svg>
<div class="t" style="top:116.00px;height:10px;line-height:10px;font-size:6.1px;color:#141414;left:853.5px;transform:scaleX(0.926);transform-origin:0 50%;">Bezeichnung</div>
<div style="left:428.7px;top:125.8px;width:459px;height:1px;background:#8c8ca4;opacity:.7;"></div>
<div class="t" style="top:125.90px;height:10px;line-height:10px;font-size:6.1px;color:#141414;left:441.5px;transform:scaleX(0.926);transform-origin:0 50%;">1</div>
<div class="t" style="top:125.90px;height:10px;line-height:10px;font-size:6.1px;color:#141414;left:482.2px;transform:scaleX(0.926);transform-origin:0 50%;">637,100,55</div>
<div class="t" style="top:125.90px;height:10px;line-height:10px;font-size:6.1px;color:#141414;left:532px;width:55.2px;overflow:hidden;transform:scaleX(0.852);transform-origin:0 50%;">2 GO STRAHLERK</div>
<div class="t" style="top:125.90px;height:10px;line-height:10px;font-size:6.1px;color:#141414;right:221.70000000000005px;text-align:right;transform:scaleX(0.926);transform-origin:100% 50%;">98,000</div>
<div class="t" style="top:125.90px;height:10px;line-height:10px;font-size:6.1px;color:#141414;right:179.79999999999995px;text-align:right;transform:scaleX(0.926);transform-origin:100% 50%;">0,000</div>
<div class="t" style="top:125.90px;height:10px;line-height:10px;font-size:6.1px;color:#141414;right:138.79999999999995px;text-align:right;transform:scaleX(0.926);transform-origin:100% 50%;">54.372,000</div>
<div class="t" style="top:125.90px;height:10px;line-height:10px;font-size:6.1px;color:#141414;right:92.5px;text-align:right;transform:scaleX(0.926);transform-origin:100% 50%;">0,000</div>
<div class="t" style="top:125.90px;height:10px;line-height:10px;font-size:6.1px;color:#141414;right:52px;text-align:right;transform:scaleX(0.926);transform-origin:100% 50%;">1,000000</div>
<div class="t" style="top:125.90px;height:10px;line-height:10px;font-size:6.1px;color:#141414;left:852px;width:38.2px;overflow:hidden;transform:scaleX(0.926);transform-origin:0 50%;">weiß feinstruk</div>
<div class="t" style="top:136.90px;height:10px;line-height:10px;font-size:6.1px;color:#141414;left:441.5px;transform:scaleX(0.926);transform-origin:0 50%;">2</div>
<div class="t" style="top:136.90px;height:10px;line-height:10px;font-size:6.1px;color:#141414;left:482.2px;transform:scaleX(0.926);transform-origin:0 50%;">637,10,0</div>
<div class="t" style="top:136.90px;height:10px;line-height:10px;font-size:6.1px;color:#141414;left:532px;width:55.2px;overflow:hidden;transform:scaleX(0.852);transform-origin:0 50%;">2 GO FEDERBÜG</div>
<div class="t" style="top:136.90px;height:10px;line-height:10px;font-size:6.1px;color:#141414;right:221.70000000000005px;text-align:right;transform:scaleX(0.926);transform-origin:100% 50%;">196,000</div>
<div class="t" style="top:136.90px;height:10px;line-height:10px;font-size:6.1px;color:#141414;right:179.79999999999995px;text-align:right;transform:scaleX(0.926);transform-origin:100% 50%;">0,000</div>
<div class="t" style="top:136.90px;height:10px;line-height:10px;font-size:6.1px;color:#141414;right:138.79999999999995px;text-align:right;transform:scaleX(0.926);transform-origin:100% 50%;">167.652,000</div>
<div class="t" style="top:136.90px;height:10px;line-height:10px;font-size:6.1px;color:#141414;right:92.5px;text-align:right;transform:scaleX(0.926);transform-origin:100% 50%;">0,000</div>
<div class="t" style="top:136.90px;height:10px;line-height:10px;font-size:6.1px;color:#141414;right:52px;text-align:right;transform:scaleX(0.926);transform-origin:100% 50%;">2,000000</div>
<div class="t" style="top:147.80px;height:10px;line-height:10px;font-size:6.1px;color:#141414;left:441.5px;transform:scaleX(0.926);transform-origin:0 50%;">3</div>
<div class="t" style="top:147.80px;height:10px;line-height:10px;font-size:6.1px;color:#141414;left:482.2px;transform:scaleX(0.926);transform-origin:0 50%;">637,200,55</div>
<div class="t" style="top:147.80px;height:10px;line-height:10px;font-size:6.1px;color:#141414;left:532px;width:55.2px;overflow:hidden;transform:scaleX(0.852);transform-origin:0 50%;">2 GO FIXIERRING</div>
<div class="t" style="top:147.80px;height:10px;line-height:10px;font-size:6.1px;color:#141414;right:221.70000000000005px;text-align:right;transform:scaleX(0.926);transform-origin:100% 50%;">98,000</div>
<div class="t" style="top:147.80px;height:10px;line-height:10px;font-size:6.1px;color:#141414;right:179.79999999999995px;text-align:right;transform:scaleX(0.926);transform-origin:100% 50%;">0,000</div>
<div class="t" style="top:147.80px;height:10px;line-height:10px;font-size:6.1px;color:#141414;right:138.79999999999995px;text-align:right;transform:scaleX(0.926);transform-origin:100% 50%;">58.329,000</div>
<div class="t" style="top:147.80px;height:10px;line-height:10px;font-size:6.1px;color:#141414;right:92.5px;text-align:right;transform:scaleX(0.926);transform-origin:100% 50%;">0,000</div>
<div class="t" style="top:147.80px;height:10px;line-height:10px;font-size:6.1px;color:#141414;right:52px;text-align:right;transform:scaleX(0.926);transform-origin:100% 50%;">1,000000</div>
<div class="t" style="top:147.80px;height:10px;line-height:10px;font-size:6.1px;color:#141414;left:852px;width:38.2px;overflow:hidden;transform:scaleX(0.926);transform-origin:0 50%;">weiß</div>
<div class="t" style="top:158.70px;height:10px;line-height:10px;font-size:6.1px;color:#141414;left:441.5px;transform:scaleX(0.926);transform-origin:0 50%;">4</div>
<div class="t" style="top:158.70px;height:10px;line-height:10px;font-size:6.1px;color:#141414;left:482.2px;transform:scaleX(0.926);transform-origin:0 50%;">637,400,55</div>
<div class="t" style="top:158.70px;height:10px;line-height:10px;font-size:6.1px;color:#141414;left:532px;width:55.2px;overflow:hidden;transform:scaleX(0.852);transform-origin:0 50%;">2 GO BÜGEL WS</div>
<div class="t" style="top:158.70px;height:10px;line-height:10px;font-size:6.1px;color:#141414;right:221.70000000000005px;text-align:right;transform:scaleX(0.926);transform-origin:100% 50%;">98,000</div>
<div class="t" style="top:158.70px;height:10px;line-height:10px;font-size:6.1px;color:#141414;right:179.79999999999995px;text-align:right;transform:scaleX(0.926);transform-origin:100% 50%;">0,000</div>
<div class="t" style="top:158.70px;height:10px;line-height:10px;font-size:6.1px;color:#141414;right:138.79999999999995px;text-align:right;transform:scaleX(0.926);transform-origin:100% 50%;">52.962,000</div>
<div class="t" style="top:158.70px;height:10px;line-height:10px;font-size:6.1px;color:#141414;right:92.5px;text-align:right;transform:scaleX(0.926);transform-origin:100% 50%;">0,000</div>
<div class="t" style="top:158.70px;height:10px;line-height:10px;font-size:6.1px;color:#141414;right:52px;text-align:right;transform:scaleX(0.926);transform-origin:100% 50%;">1,000000</div>
<div class="t" style="top:158.70px;height:10px;line-height:10px;font-size:6.1px;color:#141414;left:852px;width:38.2px;overflow:hidden;transform:scaleX(0.926);transform-origin:0 50%;">weiß feinstrux</div>
<div class="t" style="top:169.60px;height:10px;line-height:10px;font-size:6.1px;color:#141414;left:441.5px;transform:scaleX(0.926);transform-origin:0 50%;clip-path:inset(0 0 0.5px 0);">5</div>
<div class="t" style="top:169.60px;height:10px;line-height:10px;font-size:6.1px;color:#141414;left:482.2px;transform:scaleX(0.926);transform-origin:0 50%;clip-path:inset(0 0 0.5px 0);">637,5,5</div>
<div class="t" style="top:169.60px;height:10px;line-height:10px;font-size:6.1px;color:#141414;left:532px;width:55.2px;overflow:hidden;transform:scaleX(0.852);transform-origin:0 50%;clip-path:inset(0 0 0.5px 0);">2 GO EVG DECKE</div>
<div class="t" style="top:169.60px;height:10px;line-height:10px;font-size:6.1px;color:#141414;right:221.70000000000005px;text-align:right;transform:scaleX(0.926);transform-origin:100% 50%;clip-path:inset(0 0 0.5px 0);">98,000</div>
<div class="t" style="top:169.60px;height:10px;line-height:10px;font-size:6.1px;color:#141414;right:179.79999999999995px;text-align:right;transform:scaleX(0.926);transform-origin:100% 50%;clip-path:inset(0 0 0.5px 0);">0,000</div>
<div class="t" style="top:169.60px;height:10px;line-height:10px;font-size:6.1px;color:#141414;right:138.79999999999995px;text-align:right;transform:scaleX(0.926);transform-origin:100% 50%;clip-path:inset(0 0 0.5px 0);">54.380,000</div>
<div class="t" style="top:169.60px;height:10px;line-height:10px;font-size:6.1px;color:#141414;right:92.5px;text-align:right;transform:scaleX(0.926);transform-origin:100% 50%;clip-path:inset(0 0 0.5px 0);">0,000</div>
<div class="t" style="top:169.60px;height:10px;line-height:10px;font-size:6.1px;color:#141414;right:52px;text-align:right;transform:scaleX(0.926);transform-origin:100% 50%;clip-path:inset(0 0 0.5px 0);">1,000000</div>
<div class="t" style="top:169.60px;height:10px;line-height:10px;font-size:6.1px;color:#141414;left:852px;width:38.2px;overflow:hidden;transform:scaleX(0.926);transform-origin:0 50%;clip-path:inset(0 0 0.5px 0);">weiß</div>
<div style="left:887.5px;top:115.5px;width:8.7px;height:63px;background:#fbfbfb;"></div>
<div style="left:887.5px;top:116px;width:8.7px;height:1px;background:#222;"></div>
<div style="left:888px;top:117px;width:7.2px;height:10px;background:#f0f0f0;border-right:1px solid #666;border-bottom:1px solid #666;"></div>
<svg style="left:890.2px;top:121px" width="3" height="3" viewBox="0 0 3 3"><path d="M0 2.5h3L1.5 0.2z" fill="#bbb"/></svg>
<div style="left:888px;top:128px;width:7.2px;height:15px;background:linear-gradient(90deg,#eaeaea,#cfcfcf);border-right:1px solid #555;border-bottom:1px solid #555;"></div>
<div style="left:888px;top:170.5px;width:7.2px;height:6px;background:#f0f0f0;border-right:1px solid #666;border-bottom:1px solid #666;"></div>
<svg style="left:890.2px;top:172.5px" width="3" height="3" viewBox="0 0 3 3"><path d="M0 0.3h3L1.5 2.6z" fill="#bbb"/></svg>
<div style="left:428.7px;top:178.4px;width:467.5px;height:8.3px;background:#f6f6f6;"></div>
<div style="left:431.5px;top:178.4px;width:8px;height:7.7px;background:#f0f0f0;border-left:1px solid #444;border-bottom:1px solid #444;border-right:1px solid #888;"></div>
<svg style="left:434.5px;top:181px" width="3" height="3" viewBox="0 0 3 3"><path d="M3 0v3L0.5 1.5z" fill="#bbb"/></svg>
<div style="left:441px;top:178.4px;width:287px;height:7.7px;background:linear-gradient(#ececec,#c6c6c6 55%,#e2e2e2);border-right:1px solid #555;border-bottom:1px solid #666;"></div>
<div style="left:879.5px;top:178.4px;width:7px;height:7.7px;background:#ececec;border-right:1px solid #333;border-bottom:1px solid #333;"></div>
<svg style="left:881.7px;top:180.7px" width="3" height="3" viewBox="0 0 3 3"><path d="M0 0v3L2.5 1.5z" fill="#bbb"/></svg>
<div style="left:428.7px;top:186.6px;width:467.5px;height:2px;background:#b4b4b8;"></div>
<div style="left:428.7px;top:188.7px;width:467.5px;height:10.4px;background:linear-gradient(#efeff5 0%,#dfdfea 40%,#c8c8da 75%,#babace 100%);"></div>
<div class="t" style="top:189.20px;height:10px;line-height:10px;font-size:6.1px;color:#141414;left:563.4px;width:200px;text-align:center;transform:scaleX(0.926);transform-origin:50% 50%;">Defekte Teile</div>
<div style="left:428.7px;top:199px;width:468.1px;height:65.6px;background:#fff;"></div>
<div style="left:428.7px;top:199px;width:392px;height:11.3px;background:linear-gradient(#fafafc 0%,#ececf2 30%,#d4d4e2 65%,#c2c2d6 92%,#dcdce8 100%);"></div>
<div style="left:428.7px;top:198.6px;width:467.5px;height:1px;background:#8a8aa0;opacity:.6;"></div>
<div style="left:438px;top:199px;width:1px;height:11.3px;background:#84849c;"></div>
<div style="left:489px;top:199px;width:1px;height:11.3px;background:#84849c;"></div>
<div style="left:490px;top:199px;width:1px;height:11.3px;background:#f8f8fc;"></div>
<div class="t" style="top:199.80px;height:10px;line-height:10px;font-size:6.1px;color:#141414;left:362.54999999999995px;width:200px;text-align:center;transform:scaleX(0.926);transform-origin:50% 50%;">Fehlermenge</div>
<svg style="left:485.79999999999995px;top:204px" width="3" height="2" viewBox="0 0 3 2"><path d="M0 0h3L1.5 2z" fill="#222"/></svg>
<div style="left:594px;top:199px;width:1px;height:11.3px;background:#84849c;"></div>
<div style="left:595px;top:199px;width:1px;height:11.3px;background:#f8f8fc;"></div>
<div class="t" style="top:199.80px;height:10px;line-height:10px;font-size:6.1px;color:#141414;left:440.9px;width:200px;text-align:center;transform:scaleX(0.926);transform-origin:50% 50%;">Fehlergrund</div>
<svg style="left:590.8px;top:204px" width="3" height="2" viewBox="0 0 3 2"><path d="M0 0h3L1.5 2z" fill="#222"/></svg>
<div style="left:647px;top:199px;width:1px;height:11.3px;background:#84849c;"></div>
<div style="left:648px;top:199px;width:1px;height:11.3px;background:#f8f8fc;"></div>
<div class="t" style="top:199.80px;height:10px;line-height:10px;font-size:6.1px;color:#141414;left:596.9px;transform:scaleX(0.926);transform-origin:0 50%;">Fehlermenge bes</div>
<svg style="left:642.9px;top:204px" width="3" height="2" viewBox="0 0 3 2"><path d="M0 0h3L1.5 2z" fill="#222"/></svg>
<div style="left:689px;top:199px;width:1px;height:11.3px;background:#84849c;"></div>
<div style="left:690px;top:199px;width:1px;height:11.3px;background:#f8f8fc;"></div>
<div class="t" style="top:199.80px;height:10px;line-height:10px;font-size:6.1px;color:#141414;left:566.6px;width:200px;text-align:center;transform:scaleX(0.926);transform-origin:50% 50%;">Ausschuss</div>
<svg style="left:685.1px;top:204px" width="3" height="2" viewBox="0 0 3 2"><path d="M0 0h3L1.5 2z" fill="#222"/></svg>
<div style="left:715px;top:199px;width:1px;height:11.3px;background:#84849c;"></div>
<div style="left:716px;top:199px;width:1px;height:11.3px;background:#f8f8fc;"></div>
<div class="t" style="top:199.80px;height:10px;line-height:10px;font-size:6.1px;color:#141414;left:601.05px;width:200px;text-align:center;transform:scaleX(0.926);transform-origin:50% 50%;">KB</div>
<svg style="left:711.8px;top:204px" width="3" height="2" viewBox="0 0 3 2"><path d="M0 0h3L1.5 2z" fill="#222"/></svg>
<div style="left:820px;top:199px;width:1px;height:11.3px;background:#84849c;"></div>
<div style="left:821px;top:199px;width:1px;height:11.3px;background:#f8f8fc;"></div>
<div class="t" style="top:199.80px;height:10px;line-height:10px;font-size:6.1px;color:#141414;left:666.55px;width:200px;text-align:center;transform:scaleX(0.926);transform-origin:50% 50%;">Hinweistext</div>
<svg style="left:816.1px;top:204px" width="3" height="2" viewBox="0 0 3 2"><path d="M0 0h3L1.5 2z" fill="#222"/></svg>
<div style="left:428.7px;top:209.8px;width:392px;height:1px;background:#8c8ca4;opacity:.7;"></div>
</body></html>
